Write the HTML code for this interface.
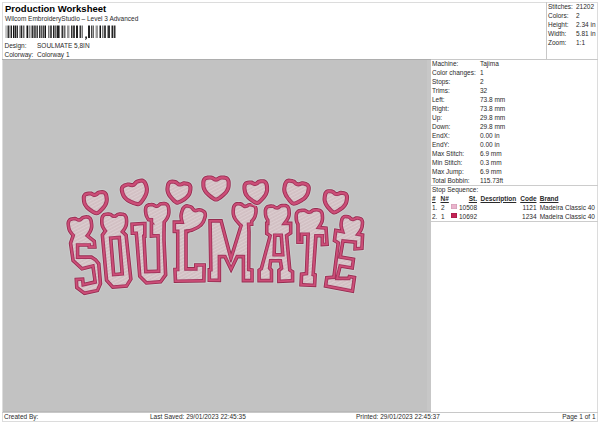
<!DOCTYPE html>
<html><head><meta charset="utf-8"><style>
html,body{margin:0;padding:0;background:#fff;width:600px;height:424px;overflow:hidden}
.t{position:absolute;white-space:nowrap;font-family:"Liberation Sans",sans-serif;color:#2a2a2a;line-height:1}
.l{position:absolute}
svg{position:absolute;left:0;top:0}
</style></head><body>
<div class="l" style="left:3px;top:59px;width:428px;height:353px;background:#c2c2c2"></div>
<div class="l" style="left:427px;top:59px;width:4px;height:353px;background:#c7c7c7"></div>
<div class="l" style="left:2px;top:2px;width:596px;height:1px;background:#dcdcdc"></div>
<div class="l" style="left:2px;top:421px;width:596px;height:1px;background:#dcdcdc"></div>
<div class="l" style="left:2px;top:2px;width:1px;height:420px;background:#dcdcdc"></div>
<div class="l" style="left:597px;top:2px;width:1px;height:420px;background:#dcdcdc"></div>
<div class="l" style="left:546px;top:2px;width:1px;height:57px;background:#c8c8c8"></div>
<div class="l" style="left:2px;top:59px;width:429px;height:1px;background:#adadad"></div>
<div class="l" style="left:431px;top:59px;width:167px;height:1px;background:#c8c8c8"></div>
<div class="l" style="left:3px;top:411px;width:428px;height:1px;background:#b8b8b8"></div>
<div class="l" style="left:2px;top:412px;width:596px;height:1px;background:#c8c8c8"></div>
<div class="l" style="left:431px;top:185px;width:167px;height:1px;background:#cccccc"></div>
<div class="l" style="left:431px;top:221px;width:167px;height:1px;background:#cccccc"></div>
<div class="t" style="left:5px;top:3.71px;font-size:9.5px;font-weight:bold;color:#000;">Production Worksheet</div>
<div class="t" style="left:5px;top:15.50px;font-size:6.5px;">Wilcom EmbroideryStudio – Level 3 Advanced</div>
<div class="t" style="left:4.5px;top:42.70px;font-size:6.5px;">Design:</div>
<div class="t" style="left:37px;top:42.70px;font-size:6.5px;">SOULMATE 5,8IN</div>
<div class="t" style="left:4.5px;top:51.70px;font-size:6.5px;">Colorway:</div>
<div class="t" style="left:37px;top:51.70px;font-size:6.5px;">Colorway 1</div>
<div class="t" style="left:548px;top:4.00px;font-size:6.5px;">Stitches:</div>
<div class="t" style="left:576px;top:4.00px;font-size:6.5px;">21202</div>
<div class="t" style="left:548px;top:13.00px;font-size:6.5px;">Colors:</div>
<div class="t" style="left:576px;top:13.00px;font-size:6.5px;">2</div>
<div class="t" style="left:548px;top:22.00px;font-size:6.5px;">Height:</div>
<div class="t" style="left:576px;top:22.00px;font-size:6.5px;">2.34 in</div>
<div class="t" style="left:548px;top:31.00px;font-size:6.5px;">Width:</div>
<div class="t" style="left:576px;top:31.00px;font-size:6.5px;">5.81 in</div>
<div class="t" style="left:548px;top:40.00px;font-size:6.5px;">Zoom:</div>
<div class="t" style="left:576px;top:40.00px;font-size:6.5px;">1:1</div>
<div class="t" style="left:432px;top:60.70px;font-size:6.5px;">Machine:</div>
<div class="t" style="left:480px;top:60.70px;font-size:6.5px;">Tajima</div>
<div class="t" style="left:432px;top:69.70px;font-size:6.5px;">Color changes:</div>
<div class="t" style="left:480px;top:69.70px;font-size:6.5px;">1</div>
<div class="t" style="left:432px;top:78.70px;font-size:6.5px;">Stops:</div>
<div class="t" style="left:480px;top:78.70px;font-size:6.5px;">2</div>
<div class="t" style="left:432px;top:87.70px;font-size:6.5px;">Trims:</div>
<div class="t" style="left:480px;top:87.70px;font-size:6.5px;">32</div>
<div class="t" style="left:432px;top:96.70px;font-size:6.5px;">Left:</div>
<div class="t" style="left:480px;top:96.70px;font-size:6.5px;">73.8 mm</div>
<div class="t" style="left:432px;top:105.70px;font-size:6.5px;">Right:</div>
<div class="t" style="left:480px;top:105.70px;font-size:6.5px;">73.8 mm</div>
<div class="t" style="left:432px;top:114.70px;font-size:6.5px;">Up:</div>
<div class="t" style="left:480px;top:114.70px;font-size:6.5px;">29.8 mm</div>
<div class="t" style="left:432px;top:123.70px;font-size:6.5px;">Down:</div>
<div class="t" style="left:480px;top:123.70px;font-size:6.5px;">29.8 mm</div>
<div class="t" style="left:432px;top:132.70px;font-size:6.5px;">EndX:</div>
<div class="t" style="left:480px;top:132.70px;font-size:6.5px;">0.00 in</div>
<div class="t" style="left:432px;top:141.70px;font-size:6.5px;">EndY:</div>
<div class="t" style="left:480px;top:141.70px;font-size:6.5px;">0.00 in</div>
<div class="t" style="left:432px;top:150.70px;font-size:6.5px;">Max Stitch:</div>
<div class="t" style="left:480px;top:150.70px;font-size:6.5px;">6.9 mm</div>
<div class="t" style="left:432px;top:159.70px;font-size:6.5px;">Min Stitch:</div>
<div class="t" style="left:480px;top:159.70px;font-size:6.5px;">0.3 mm</div>
<div class="t" style="left:432px;top:168.70px;font-size:6.5px;">Max Jump:</div>
<div class="t" style="left:480px;top:168.70px;font-size:6.5px;">6.9 mm</div>
<div class="t" style="left:432px;top:177.70px;font-size:6.5px;">Total Bobbin:</div>
<div class="t" style="left:480px;top:177.70px;font-size:6.5px;">115.73ft</div>
<div class="t" style="left:432px;top:186.90px;font-size:6.5px;">Stop Sequence:</div>
<div class="t" style="left:432px;top:195.70px;font-size:6.5px;font-weight:bold;text-decoration:underline;">#</div>
<div class="t" style="left:440.5px;top:195.70px;font-size:6.5px;font-weight:bold;text-decoration:underline;">N#</div>
<div class="t" style="right:123px;top:195.70px;font-size:6.5px;font-weight:bold;text-decoration:underline;">St.</div>
<div class="t" style="left:480.5px;top:195.70px;font-size:6.5px;font-weight:bold;text-decoration:underline;">Description</div>
<div class="t" style="right:63.5px;top:195.70px;font-size:6.5px;font-weight:bold;text-decoration:underline;">Code</div>
<div class="t" style="left:539.7px;top:195.70px;font-size:6.5px;font-weight:bold;text-decoration:underline;">Brand</div>
<div class="t" style="left:432px;top:205.10px;font-size:6.5px;">1.</div>
<div class="t" style="left:441px;top:205.10px;font-size:6.5px;">2</div>
<div class="l" style="left:451.2px;top:203.8px;width:5.8px;height:5.6px;background:#eab4cc;box-shadow:inset 0 0 0 0.6px #d09ab4"></div>
<div class="t" style="right:123px;top:205.10px;font-size:6.5px;">10508</div>
<div class="t" style="right:63.5px;top:205.10px;font-size:6.5px;">1121</div>
<div class="t" style="left:539.7px;top:205.10px;font-size:6.5px;">Madeira Classic 40</div>
<div class="t" style="left:432px;top:213.60px;font-size:6.5px;">2.</div>
<div class="t" style="left:441px;top:213.60px;font-size:6.5px;">1</div>
<div class="l" style="left:451.2px;top:212.8px;width:5.8px;height:5.6px;background:#c42454;box-shadow:inset 0 0 0 0.6px #a01c48"></div>
<div class="t" style="right:123px;top:213.60px;font-size:6.5px;">10692</div>
<div class="t" style="right:63.5px;top:213.60px;font-size:6.5px;">1234</div>
<div class="t" style="left:539.7px;top:213.60px;font-size:6.5px;">Madeira Classic 40</div>
<div class="t" style="left:4px;top:413.50px;font-size:6.5px;">Created By:</div>
<div class="t" style="left:150px;top:413.50px;font-size:6.5px;">Last Saved: 29/01/2023 22:45:35</div>
<div class="t" style="left:356px;top:413.50px;font-size:6.5px;">Printed: 29/01/2023 22:45:37</div>
<div class="t" style="right:4.5px;top:413.50px;font-size:6.5px;">Page 1 of 1</div>

<svg width="600" height="424" viewBox="0 0 600 424"><rect x="5.5" y="25.5" width="1.10" height="12.5" fill="#999"/><rect x="7.5" y="25.5" width="1.70" height="12.5" fill="#333"/><rect x="9.6" y="25.5" width="0.80" height="12.5" fill="#555"/><rect x="10.8" y="25.5" width="1.20" height="12.5" fill="#222"/><rect x="13" y="25.5" width="1.50" height="12.5" fill="#111"/><rect x="15" y="25.5" width="1.20" height="12.5" fill="#222"/><rect x="16.6" y="25.5" width="1.40" height="12.5" fill="#333"/><rect x="19.5" y="25.5" width="1.10" height="12.5" fill="#444"/><rect x="21" y="25.5" width="1.20" height="12.5" fill="#222"/><rect x="22.8" y="25.5" width="1.70" height="12.5" fill="#666"/><rect x="26.5" y="25.5" width="1.50" height="12.5" fill="#111"/><rect x="28.5" y="25.5" width="2.00" height="12.5" fill="#888"/><rect x="31.5" y="25.5" width="1.50" height="12.5" fill="#333"/><rect x="33.4" y="25.5" width="1.60" height="12.5" fill="#555"/><rect x="35.3" y="25.5" width="1.20" height="12.5" fill="#222"/><rect x="37" y="25.5" width="1.00" height="12.5" fill="#444"/><rect x="39" y="25.5" width="1.50" height="12.5" fill="#333"/><rect x="41" y="25.5" width="1.40" height="12.5" fill="#555"/><rect x="42.8" y="25.5" width="1.20" height="12.5" fill="#444"/><rect x="44.5" y="25.5" width="1.50" height="12.5" fill="#111"/><rect x="48" y="25.5" width="1.50" height="12.5" fill="#777"/><rect x="50" y="25.5" width="2.00" height="12.5" fill="#555"/><rect x="53" y="25.5" width="1.50" height="12.5" fill="#222"/><rect x="55" y="25.5" width="1.60" height="12.5" fill="#666"/><rect x="57" y="25.5" width="2.60" height="12.5" fill="#222"/><rect x="61.5" y="25.5" width="1.50" height="12.5" fill="#333"/><rect x="63.5" y="25.5" width="2.00" height="12.5" fill="#666"/><rect x="67" y="25.5" width="2.50" height="12.5" fill="#999"/><rect x="71" y="25.5" width="1.50" height="12.5" fill="#333"/><rect x="73" y="25.5" width="2.00" height="12.5" fill="#444"/><rect x="76" y="25.5" width="2.00" height="12.5" fill="#222"/><rect x="79.5" y="25.5" width="1.50" height="12.5" fill="#333"/><rect x="81.5" y="25.5" width="1.50" height="12.5" fill="#777"/><rect x="88" y="25.5" width="2.00" height="12.5" fill="#222"/><rect x="91" y="25.5" width="1.40" height="12.5" fill="#444"/><rect x="92.8" y="25.5" width="1.20" height="12.5" fill="#666"/><rect x="95.5" y="25.5" width="2.50" height="12.5" fill="#999"/><rect x="99.5" y="25.5" width="1.50" height="12.5" fill="#111"/><rect x="102" y="25.5" width="1.50" height="12.5" fill="#777"/><rect x="104" y="25.5" width="2.00" height="12.5" fill="#444"/><rect x="107.5" y="25.5" width="2.50" height="12.5" fill="#333"/><rect x="111.5" y="25.5" width="1.50" height="12.5" fill="#222"/><rect x="113.6" y="25.5" width="1.90" height="12.5" fill="#333"/><path d="M85.2,36.5 h1.8 v1.8 l-1.2,1.8 h-0.6 l0.6,-1.8 h-0.6 z" fill="#222"/></svg>
<svg width="600" height="424" viewBox="0 0 600 424"><defs><pattern id="sat" patternUnits="userSpaceOnUse" width="3" height="3" patternTransform="rotate(-28)"><rect width="3" height="3" fill="#d4c2c5"/><rect y="0" width="3" height="0.9" fill="#ddcfd2"/><rect x="1" y="1.8" width="1.2" height="0.6" fill="#c9b7bb"/></pattern></defs><path d="M78.8,217.3 78.3,217.1 77.1,216.4 76.6,216.2 75.5,215.9 74.5,215.9 72.9,216.0 71.4,216.3 69.8,216.8 68.8,217.3 67.9,217.9 67.4,218.3 66.8,219.2 66.2,220.2 65.9,221.3 65.6,222.4 65.5,223.6 65.6,224.8 65.8,226.7 66.1,228.5 66.5,229.8 66.9,231.1 67.5,232.3 68.3,233.6 69.1,234.8 70.2,236.0 67.8,242.7 67.8,243.0 70.5,261.6 70.6,262.0 80.9,271.5 81.2,271.6 81.5,271.7 81.7,271.7 90.7,269.3 92.2,279.9 85.6,281.4 85.2,277.1 85.0,276.7 84.7,276.5 84.4,276.4 74.3,276.9 73.8,277.1 73.5,277.6 74.1,288.6 74.2,289.0 74.5,289.2 83.5,295.9 83.7,296.0 84.0,296.1 98.9,292.9 99.2,292.7 99.5,292.4 103.1,284.4 103.2,283.9 101.4,262.9 101.3,262.7 101.2,262.4 97.4,257.8 92.3,254.5 92.0,254.4 80.3,254.4 80.3,247.7 86.6,247.7 86.6,248.8 86.7,249.1 87.0,249.5 87.4,249.7 96.9,249.7 97.4,249.5 97.6,249.1 97.7,248.7 96.8,240.0 96.6,239.6 91.1,235.3 92.2,233.4 93.2,231.4 93.9,229.3 94.3,227.2 94.4,225.2 94.3,223.3 93.9,220.9 93.4,219.1 92.9,218.0 92.6,217.5 91.9,216.5 91.2,215.8 90.3,215.1 89.7,214.8 89.2,214.6 88.1,214.3 86.5,214.2 85.0,214.3 83.9,214.5 82.4,214.8 81.5,215.2 81.0,215.5 79.3,217.1 79.1,217.2Z" fill="#cbcece" fill-rule="evenodd"/><path d="M78.7,218.2 77.9,217.9 76.3,217.0 75.4,216.8 74.4,216.8 73.0,216.9 71.6,217.2 70.1,217.6 69.2,218.0 68.8,218.3 68.1,218.9 67.6,219.7 67.1,220.5 66.7,221.5 66.5,222.5 66.4,223.6 66.5,224.8 66.7,226.5 67.0,228.3 67.3,229.5 67.7,230.7 68.3,231.9 69.0,233.1 69.8,234.2 71.2,235.8 68.7,243.0 71.4,261.5 81.5,270.8 91.4,268.2 93.2,280.6 84.8,282.5 84.3,277.3 74.4,277.8 75.0,288.5 84.0,295.2 98.7,292.0 102.3,284.0 100.5,263.0 96.8,258.5 92.0,255.3 79.4,255.3 79.4,246.8 87.5,246.8 87.5,248.8 96.8,248.8 96.0,240.3 89.8,235.4 91.1,233.6 92.1,231.7 92.9,229.7 93.4,227.8 93.5,225.9 93.4,224.0 93.0,221.0 92.6,219.4 92.4,218.9 91.9,218.0 91.3,217.1 90.6,216.4 89.8,215.9 89.4,215.6 88.5,215.3 87.5,215.2 86.5,215.1 85.1,215.2 83.6,215.5 82.7,215.7 81.9,216.0 81.5,216.3 80.1,217.6 79.4,218.1 79.1,218.2Z" fill="#962c50" fill-rule="evenodd"/><path d="M78.6,219.0 78.0,218.9 77.5,218.6 76.0,217.8 74.9,217.7 73.6,217.7 72.2,217.9 70.9,218.3 69.7,218.8 69.0,219.2 68.5,219.8 68.1,220.5 67.7,221.3 67.4,222.6 67.3,223.6 67.3,224.7 67.5,226.4 67.8,228.2 68.1,229.3 68.5,230.4 69.0,231.5 70.1,233.1 70.9,234.2 72.2,235.5 69.6,243.1 72.2,261.1 81.7,269.9 92.1,267.1 94.2,281.3 84.0,283.5 83.5,278.2 75.3,278.6 75.8,288.1 84.2,294.3 98.1,291.3 101.4,283.9 99.7,263.3 96.2,259.1 91.7,256.2 78.6,256.2 78.6,246.0 88.3,246.0 88.3,248.0 95.9,248.0 95.2,240.7 88.6,235.6 90.0,233.8 91.0,232.0 91.8,230.1 92.2,228.8 92.5,227.6 92.7,226.4 92.7,225.3 92.4,222.3 91.9,220.2 91.6,219.2 91.2,218.4 90.6,217.7 90.0,217.1 89.0,216.4 88.7,216.3 87.9,216.1 87.0,216.0 86.0,216.0 84.3,216.2 83.4,216.4 82.6,216.7 82.0,217.0 80.7,218.2 80.3,218.5 79.8,218.8 79.2,219.0Z" fill="#cc4e78" fill-rule="evenodd"/><path d="M78.3,220.9 77.4,220.6 75.3,219.5 74.1,219.5 72.6,219.7 71.1,220.1 70.6,220.4 70.3,220.6 69.8,221.1 69.5,221.7 69.3,222.3 69.2,222.9 69.1,224.1 69.4,226.1 69.8,228.3 70.2,229.7 70.9,231.1 72.0,232.5 72.7,233.5 74.3,235.1 71.5,243.3 73.9,260.2 82.2,267.8 93.6,264.8 96.2,282.7 82.4,285.8 81.9,280.1 77.2,280.4 77.6,287.1 84.6,292.3 96.8,289.7 99.5,283.5 97.9,264.1 95.0,260.5 91.2,258.0 76.7,258.0 76.7,244.1 90.2,244.1 90.2,246.1 93.8,246.1 93.4,241.7 86.0,235.9 88.0,233.3 89.1,231.7 89.9,230.0 90.3,228.9 90.6,227.8 90.8,226.8 90.8,225.8 90.7,223.7 90.3,221.1 90.0,220.3 89.6,219.4 89.2,218.9 88.8,218.5 88.1,218.0 86.9,217.8 85.0,217.9 83.9,218.2 83.1,218.5 81.4,220.0 80.6,220.5 79.5,220.9Z" fill="#a3345c" fill-rule="evenodd"/><path d="M75.1,220.4 74.1,220.4 73.2,220.5 71.7,220.9 70.9,221.2 70.6,221.6 70.3,222.3 70.1,223.0 70.0,223.6 70.1,225.0 70.4,227.1 70.8,228.5 71.2,229.7 72.0,231.1 72.7,232.0 73.4,232.9 75.3,234.9 72.4,243.3 74.8,259.7 82.5,266.8 94.4,263.7 97.2,283.4 81.6,286.9 81.0,281.1 78.2,281.2 78.5,286.6 84.8,291.3 96.2,288.9 98.6,283.4 97.0,264.4 94.4,261.2 90.9,258.9 75.8,258.9 75.8,243.2 91.1,243.2 91.1,245.2 92.8,245.2 92.6,242.2 84.8,236.1 87.3,232.8 88.0,231.7 88.8,230.2 89.4,228.6 89.8,227.1 89.9,226.3 89.9,225.3 89.6,222.8 89.3,220.9 89.1,220.3 88.8,219.9 88.2,219.1 87.8,218.9 86.9,218.7 85.1,218.8 84.4,219.0 83.6,219.2 81.9,220.8 80.9,221.4 79.6,221.8 78.2,221.8 77.1,221.4 76.3,221.1Z" fill="url(#sat)" fill-rule="evenodd"/>
<path d="M102.0,231.0 99.8,234.0 99.6,234.2 99.6,234.5 103.9,281.1 104.0,281.4 111.3,289.6 111.7,289.9 112.1,289.9 127.7,288.6 127.9,288.5 128.2,288.4 128.4,288.2 133.5,280.1 133.6,279.6 128.7,234.2 128.6,233.9 128.5,233.7 126.1,231.5 127.4,229.4 128.3,227.3 128.8,225.9 129.2,223.9 129.3,222.5 129.3,220.7 129.2,219.3 129.1,218.1 128.9,216.9 128.7,216.3 128.4,215.7 127.9,214.7 127.2,213.8 126.7,213.3 125.9,212.6 125.4,212.3 124.8,212.0 123.7,211.7 121.5,211.4 120.4,211.4 119.3,211.4 118.2,211.6 117.2,211.8 116.5,212.1 114.9,213.2 114.6,213.4 114.2,213.5 113.8,213.4 113.5,213.2 112.4,212.4 111.8,212.0 110.7,211.7 109.1,211.4 107.5,211.4 105.3,211.6 103.6,212.0 102.6,212.5 102.0,212.9 101.2,213.8 100.6,214.6 100.0,215.7 99.6,216.8 99.4,217.5 99.2,218.7 99.1,220.0 99.2,223.2 99.3,224.6 99.6,225.9 100.1,227.3 100.7,228.7 101.4,230.0ZM116.8,240.4 119.3,271.5 116.1,271.7 113.6,240.6Z" fill="#cbcece" fill-rule="evenodd"/><path d="M113.4,214.2 111.4,212.8 111.0,212.7 110.0,212.4 109.0,212.3 107.5,212.3 106.0,212.4 104.4,212.7 103.5,213.1 103.0,213.3 102.3,213.9 101.6,214.7 101.0,215.6 100.6,216.6 100.4,217.1 100.2,218.2 100.0,220.0 100.0,221.9 100.1,223.8 100.3,225.1 100.7,226.4 101.5,228.3 102.2,229.6 103.1,231.0 100.5,234.5 104.8,281.0 112.0,289.0 127.6,287.7 132.7,279.6 127.8,234.3 124.9,231.6 125.8,230.2 126.9,228.3 127.7,226.4 128.1,225.1 128.3,223.1 128.4,221.3 128.3,219.4 128.1,217.6 128.0,217.1 127.6,216.1 127.1,215.2 126.5,214.3 125.8,213.6 125.4,213.3 124.5,212.9 123.5,212.6 122.4,212.4 120.9,212.3 119.4,212.3 118.4,212.4 117.4,212.7 117.0,212.8 115.4,214.0 114.6,214.4 114.2,214.4 113.8,214.4ZM117.6,239.4 120.3,272.3 115.3,272.7 112.6,239.8Z" fill="#962c50" fill-rule="evenodd"/><path d="M113.0,215.0 111.0,213.6 109.9,213.3 109.0,213.2 107.5,213.1 106.1,213.2 104.7,213.5 103.8,213.8 103.5,214.0 102.9,214.6 102.3,215.2 101.8,216.0 101.4,216.9 101.1,217.8 100.9,218.9 100.9,220.7 100.9,222.5 101.1,224.3 101.3,225.5 101.7,226.7 102.6,228.5 103.3,229.8 104.2,231.0 101.4,234.7 105.6,280.6 112.3,288.1 127.1,286.9 131.8,279.4 127.0,234.7 123.7,231.7 124.7,230.4 125.8,228.5 126.7,226.7 127.1,225.5 127.4,223.7 127.5,221.9 127.5,219.5 127.3,217.8 126.8,216.4 126.4,215.6 125.8,214.9 125.2,214.3 124.6,213.8 123.3,213.4 122.3,213.2 120.9,213.1 119.9,213.1 119.0,213.2 118.1,213.4 117.4,213.6 115.9,214.7 115.4,215.0 114.8,215.2 114.2,215.3 113.6,215.2ZM118.4,238.5 121.2,273.1 114.5,273.6 111.7,239.0Z" fill="#cc4e78" fill-rule="evenodd"/><path d="M112.2,216.6 110.2,215.3 109.6,215.1 108.8,215.0 107.6,215.0 106.3,215.1 105.2,215.3 104.7,215.5 104.2,215.9 103.8,216.3 103.4,216.9 103.1,217.5 102.9,218.2 102.7,219.6 102.7,221.2 102.8,222.9 103.0,224.5 103.2,225.5 103.9,227.1 104.5,228.2 105.2,229.3 106.5,231.0 103.3,235.3 107.4,279.9 113.1,286.2 126.0,285.1 129.9,279.0 125.2,235.6 121.2,231.8 122.8,229.8 123.6,228.8 124.5,227.1 125.2,225.5 125.5,224.0 125.7,222.4 125.7,220.1 125.6,219.1 125.5,218.2 125.3,217.5 125.0,216.9 124.6,216.3 124.2,215.9 123.9,215.6 123.5,215.4 122.9,215.2 122.1,215.1 120.8,215.0 120.0,215.0 118.5,215.2 118.0,215.3 116.9,216.2 116.2,216.6 115.3,217.0 114.2,217.2 113.1,217.0ZM120.1,236.5 123.2,274.8 112.8,275.6 109.7,237.3Z" fill="#a3345c" fill-rule="evenodd"/><path d="M109.8,216.1 108.7,215.9 107.7,215.9 106.1,216.0 105.4,216.2 105.0,216.3 104.5,216.9 104.0,217.8 103.7,218.8 103.6,220.2 103.6,221.8 103.7,223.4 104.0,224.8 104.3,225.7 105.0,227.2 105.6,228.3 107.6,231.1 104.2,235.6 108.3,279.5 113.5,285.3 125.5,284.3 129.0,278.7 124.4,236.0 120.0,231.9 122.1,229.3 122.8,228.3 123.7,226.7 124.3,225.2 124.6,223.9 124.8,222.3 124.8,220.2 124.6,218.4 124.4,217.8 124.2,217.3 123.6,216.5 123.2,216.2 122.3,216.0 120.4,215.9 119.7,215.9 118.7,216.0 118.5,216.1 117.4,216.9 116.7,217.4 115.6,217.9 114.2,218.1 112.8,217.9 111.7,217.4 111.0,216.9ZM120.9,235.5 124.2,275.6 112.0,276.6 108.7,236.5Z" fill="url(#sat)" fill-rule="evenodd"/>
<path d="M145.9,220.6 130.1,221.6 129.9,221.7 129.6,221.8 129.4,222.1 129.3,222.4 129.7,235.3 130.0,235.7 130.4,235.9 133.8,235.9 134.2,240.1 137.1,277.3 137.4,277.7 145.1,285.4 145.4,285.7 145.8,285.7 161.8,284.5 162.1,284.4 162.3,284.1 168.2,275.9 168.4,275.4 166.7,240.0 166.7,232.7 166.9,223.1 168.6,221.0 169.8,219.0 170.4,217.7 170.9,216.3 171.4,214.2 171.6,212.9 171.6,210.9 171.4,209.1 171.2,207.3 170.7,205.5 170.2,204.5 169.6,203.5 168.9,202.7 168.4,202.2 167.6,201.6 167.0,201.4 166.4,201.2 165.4,201.0 163.2,200.9 162.2,200.9 161.2,201.0 160.1,201.3 159.2,201.6 158.6,201.9 157.1,203.2 156.9,203.4 156.6,203.5 156.2,203.4 155.9,203.3 154.8,202.5 154.2,202.2 153.1,202.0 151.6,201.9 150.0,202.0 148.0,202.4 146.5,202.9 145.5,203.5 145.0,203.9 144.3,204.7 144.0,205.3 143.5,206.3 143.1,207.3 143.0,208.0 142.8,209.1 142.8,210.4 143.1,213.4 143.3,214.7 143.6,216.0 144.1,217.3 144.7,218.6ZM146.7,238.9 147.0,238.8 147.3,238.5 147.4,238.3 147.5,238.0 147.5,222.4 148.7,222.4 148.7,237.9 148.8,238.2 149.0,238.6 149.3,238.7 149.5,238.8 155.4,238.5 155.9,268.6 148.4,268.9Z" fill="#cbcece" fill-rule="evenodd"/><path d="M155.5,204.0 153.9,203.1 153.0,202.9 152.1,202.8 151.1,202.8 150.2,202.9 148.7,203.1 147.3,203.6 146.4,204.0 146.0,204.2 145.7,204.6 145.1,205.3 144.3,206.6 143.9,208.1 143.7,209.8 143.7,210.9 143.9,212.7 144.3,215.1 144.7,216.4 145.5,218.1 146.6,219.9 147.7,221.4 130.2,222.5 130.6,235.0 134.6,235.0 135.1,240.0 138.0,277.1 145.7,284.8 161.6,283.6 167.5,275.4 165.8,240.0 165.8,232.7 166.0,222.8 167.4,221.1 168.6,219.2 169.6,217.3 170.2,215.4 170.5,214.1 170.7,212.2 170.6,209.8 170.3,207.4 170.0,206.3 169.7,205.3 169.2,204.4 168.6,203.6 167.9,202.9 167.1,202.4 166.7,202.2 165.7,201.9 164.7,201.8 163.2,201.8 161.8,201.9 160.9,202.0 160.0,202.3 159.1,202.6 157.7,203.9 157.0,204.3 156.6,204.4 156.3,204.4ZM156.8,269.5 147.5,269.8 145.8,238.0 146.6,238.0 146.6,221.5 149.6,221.5 149.6,237.9 156.3,237.6Z" fill="#962c50" fill-rule="evenodd"/><path d="M145.8,222.4 131.1,223.3 131.4,234.2 135.4,234.2 135.9,239.9 138.8,276.7 146.0,283.9 161.1,282.8 166.6,275.1 165.0,240.0 165.0,232.7 165.1,222.4 166.2,221.2 167.1,220.0 168.2,218.2 168.8,217.0 169.2,215.7 169.7,214.0 169.8,212.8 169.8,211.6 169.8,209.8 169.6,208.1 169.4,207.1 169.1,206.1 168.7,205.3 168.2,204.5 167.6,203.9 166.7,203.2 166.3,203.0 165.6,202.8 164.2,202.6 162.8,202.6 161.9,202.7 161.0,202.9 160.2,203.1 159.6,203.4 159.3,203.6 157.8,204.8 157.3,205.1 156.7,205.3 156.1,205.2 155.6,205.0 153.9,204.0 153.3,203.8 152.5,203.7 151.6,203.6 149.8,203.8 148.0,204.2 147.2,204.5 146.6,204.9 145.8,205.8 145.3,206.5 144.9,207.4 144.7,208.2 144.6,209.2 144.6,210.3 144.8,213.2 145.0,214.4 145.3,215.5 145.9,217.2 146.9,218.9 148.2,220.7 150.4,220.7 150.4,237.0 157.1,236.7 157.7,270.3 146.7,270.7 144.9,237.2 145.8,237.2Z" fill="#cc4e78" fill-rule="evenodd"/><path d="M143.9,224.3 133.0,225.0 133.2,232.3 137.0,232.3 137.8,239.8 140.6,275.9 146.7,282.0 160.1,281.0 164.8,274.6 163.1,240.1 163.1,232.7 163.3,221.7 165.2,219.4 166.3,217.9 166.8,216.8 167.3,215.7 167.6,214.6 167.9,213.6 168.0,212.7 168.0,211.6 167.9,210.0 167.7,208.4 167.6,207.5 167.3,206.8 167.1,206.2 166.5,205.4 165.8,204.8 165.2,204.6 164.5,204.5 163.3,204.5 161.8,204.6 160.6,204.9 158.8,206.4 158.0,206.8 156.9,207.1 155.7,207.0 154.8,206.7 152.8,205.6 151.6,205.5 150.1,205.6 148.6,206.0 148.0,206.2 147.6,206.5 147.1,207.1 146.8,207.7 146.6,208.3 146.5,208.9 146.4,209.8 146.5,211.3 146.8,214.0 147.2,215.4 147.6,216.4 148.1,217.4 149.1,218.8 152.3,218.8 152.3,222.6 153.3,223.7 152.3,223.8 152.3,235.1 159.0,234.8 159.5,272.1 144.9,272.6 143.0,235.4 143.9,235.4Z" fill="#a3345c" fill-rule="evenodd"/><path d="M143.0,225.3 133.9,225.9 134.1,231.4 137.9,231.4 138.7,239.7 141.5,275.5 147.1,281.1 159.7,280.1 163.8,274.3 162.2,240.1 162.2,232.7 162.4,221.4 164.1,219.4 165.2,217.9 165.8,216.9 166.2,215.9 166.6,214.9 166.9,213.9 167.0,213.1 167.1,212.1 167.0,210.6 166.9,209.0 166.8,208.1 166.5,207.1 166.2,206.4 165.8,206.0 165.3,205.6 164.7,205.4 162.9,205.4 161.6,205.5 161.0,205.7 160.0,206.6 159.3,207.1 158.3,207.7 157.0,208.0 155.6,207.9 154.5,207.6 153.7,207.2 152.6,206.5 151.3,206.4 149.9,206.6 148.6,206.9 148.3,207.0 148.1,207.2 147.7,207.8 147.5,208.3 147.4,208.8 147.3,209.4 147.4,211.2 147.7,213.8 148.1,215.1 148.6,216.4 149.5,217.9 153.2,217.9 153.2,222.3 155.1,224.5 153.2,224.6 153.2,234.1 159.8,233.9 160.5,273.0 144.1,273.5 142.0,234.5 143.0,234.5Z" fill="url(#sat)" fill-rule="evenodd"/>
<path d="M178.7,219.4 172.4,219.4 172.2,219.5 171.9,219.7 171.7,220.0 171.6,220.2 171.6,233.4 171.9,233.8 172.3,234.1 175.0,234.1 175.0,266.8 172.8,266.8 172.5,267.1 172.3,267.3 172.2,267.6 172.8,283.0 172.9,283.4 173.2,283.8 173.7,283.9 205.6,283.5 205.9,283.4 206.3,283.1 206.5,282.6 206.9,263.2 206.8,262.9 206.6,262.6 206.3,262.4 206.0,262.3 193.8,262.3 193.4,262.6 193.1,263.0 193.1,266.2 188.7,266.2 188.7,234.1 189.4,234.1 189.6,234.0 190.0,233.8 190.2,233.4 191.9,232.9 193.6,232.3 196.8,230.9 199.1,229.7 200.4,228.8 201.7,227.9 202.8,226.8 203.9,225.7 205.2,224.0 205.9,222.7 206.6,220.9 207.6,217.9 208.0,216.0 208.0,214.8 208.0,214.1 207.8,213.0 207.4,211.9 207.0,210.9 206.6,210.4 205.8,209.5 204.4,208.7 202.4,207.8 201.4,207.5 200.4,207.2 198.9,207.1 198.1,207.1 196.3,207.7 195.9,207.8 195.6,207.8 195.3,207.6 195.1,207.4 194.3,206.2 193.8,205.7 193.0,205.0 191.6,204.3 190.1,203.8 188.0,203.3 186.4,203.2 185.2,203.4 184.6,203.6 183.6,204.1 183.1,204.5 182.2,205.3 181.5,206.1 181.1,206.6 180.5,207.7 180.0,208.9 179.0,211.9 178.6,213.2 178.4,214.6 178.3,215.3 178.3,216.7 178.5,218.2Z" fill="#cbcece" fill-rule="evenodd"/><path d="M195.0,208.5 194.4,207.9 193.6,206.7 192.9,206.0 192.1,205.6 190.8,204.9 188.9,204.4 187.9,204.2 186.9,204.1 185.9,204.2 185.4,204.3 184.5,204.7 183.7,205.2 182.9,205.9 181.8,207.1 181.0,208.6 180.6,209.8 180.0,211.5 179.4,214.0 179.2,216.0 179.4,218.1 179.8,220.3 172.5,220.3 172.5,233.2 175.9,233.2 175.9,267.7 173.1,267.7 173.7,283.0 205.6,282.6 206.0,263.2 194.0,263.2 194.0,267.1 187.8,267.1 187.8,233.2 189.3,233.2 189.3,232.6 190.7,232.3 192.2,231.9 193.8,231.3 196.4,230.1 197.9,229.3 199.3,228.5 200.5,227.6 201.7,226.7 202.7,225.7 203.6,224.6 204.4,223.5 205.0,222.4 205.8,220.6 206.4,218.8 206.9,217.1 207.1,215.9 207.1,215.3 207.1,214.3 206.9,213.2 206.6,212.2 206.2,211.3 205.9,211.0 205.2,210.3 204.4,209.7 203.5,209.2 202.1,208.6 200.7,208.2 199.7,208.0 198.8,208.0 198.4,208.0 196.5,208.6 195.7,208.8 195.3,208.7Z" fill="#962c50" fill-rule="evenodd"/><path d="M188.5,232.3 188.5,231.8 190.1,231.6 191.9,231.1 193.5,230.5 196.8,228.9 198.2,228.2 199.4,227.4 200.6,226.5 201.6,225.6 203.0,224.1 203.7,223.1 204.3,222.0 204.8,220.9 205.6,218.6 206.1,216.9 206.3,215.3 206.3,214.3 206.1,213.4 205.8,212.6 205.2,211.5 205.0,211.2 204.3,210.7 203.1,210.0 201.8,209.4 201.0,209.1 200.1,208.9 199.2,208.8 198.5,208.8 198.1,208.9 196.3,209.6 195.7,209.6 195.0,209.5 194.5,209.2 194.0,208.8 192.7,206.9 191.7,206.3 190.5,205.7 189.2,205.3 187.8,205.1 186.4,205.0 185.7,205.1 184.9,205.4 184.2,205.9 183.1,206.8 182.6,207.6 182.0,208.5 181.2,210.6 180.4,213.6 180.1,214.8 180.1,216.0 180.1,217.3 180.3,218.7 180.9,221.2 173.3,221.2 173.3,232.3 176.8,232.3 176.8,268.6 174.0,268.6 174.5,282.1 204.8,281.8 205.1,264.1 194.8,264.1 194.8,268.0 187.0,268.0 187.0,232.3Z" fill="#cc4e78" fill-rule="evenodd"/><path d="M175.9,270.4 176.3,280.3 203.0,279.9 203.2,265.9 196.7,265.9 196.7,269.8 185.1,269.8 185.1,230.5 186.6,230.5 186.6,230.2 189.4,229.9 191.3,229.4 192.7,228.8 196.0,227.3 197.9,226.2 198.9,225.5 199.8,224.7 200.7,223.8 201.8,222.5 202.4,221.6 203.1,220.2 203.8,218.0 204.3,216.5 204.4,215.2 204.4,214.5 204.3,213.9 204.1,213.3 203.9,212.8 203.7,212.5 203.3,212.2 202.3,211.6 201.2,211.2 200.5,210.9 199.7,210.8 198.9,210.7 196.6,211.4 195.6,211.5 194.5,211.3 193.4,210.8 192.7,210.1 191.3,208.2 190.5,207.8 189.8,207.5 189.1,207.2 187.9,207.0 186.8,206.8 186.2,206.9 185.8,207.1 185.3,207.4 184.5,208.1 183.9,208.9 183.5,209.7 182.9,211.2 182.4,212.9 182.2,214.0 182.0,215.0 181.9,216.0 182.0,217.1 182.2,219.0 183.3,223.0 175.2,223.0 175.2,230.5 178.6,230.5 178.6,270.4Z" fill="#a3345c" fill-rule="evenodd"/><path d="M176.1,229.6 179.5,229.6 179.5,271.3 176.8,271.3 177.2,279.4 202.1,279.0 202.3,266.8 197.6,266.8 197.6,270.7 184.2,270.7 184.2,229.6 185.7,229.6 185.7,229.3 189.3,229.0 191.0,228.5 192.9,227.7 196.2,226.2 197.4,225.5 198.8,224.4 200.1,223.2 201.1,222.0 201.8,220.8 202.4,219.3 203.1,217.2 203.5,215.5 203.5,214.9 203.5,214.3 203.4,213.8 203.1,213.2 202.9,213.0 202.5,212.8 201.2,212.1 200.2,211.8 199.3,211.6 198.9,211.6 197.6,212.0 196.8,212.3 195.6,212.4 194.2,212.2 192.9,211.5 192.0,210.7 191.5,210.1 190.7,208.9 190.1,208.6 188.9,208.1 187.4,207.8 186.5,207.8 186.0,208.0 185.4,208.5 185.0,208.9 184.7,209.4 184.3,210.1 183.8,211.5 183.3,213.1 182.9,215.1 182.8,216.5 183.0,218.2 183.3,219.4 184.5,223.9 176.1,223.9Z" fill="url(#sat)" fill-rule="evenodd"/>
<path d="M237.6,226.1 237.7,226.4 237.9,226.7 231.2,248.5 223.4,218.9 223.2,218.5 222.9,218.3 222.5,218.2 208.2,218.2 207.8,218.3 207.4,218.7 207.3,219.1 208.1,267.1 207.4,267.1 207.1,267.2 206.8,267.5 206.6,267.9 206.6,282.0 206.7,282.5 207.1,282.8 207.5,282.9 221.2,283.1 221.6,283.0 221.9,282.7 222.1,282.2 222.1,259.3 223.2,259.3 230.3,274.0 230.6,274.4 231.1,274.5 231.6,274.4 231.9,274.0 238.9,259.3 240.7,259.3 240.7,282.4 240.8,282.8 241.2,283.2 241.6,283.3 253.8,283.3 254.2,283.2 254.6,282.8 254.7,282.4 254.7,268.3 254.5,267.9 254.1,267.7 251.4,267.2 251.7,232.0 251.4,226.9 253.7,226.9 254.0,226.7 254.3,226.4 254.4,226.0 254.4,222.4 255.8,220.6 256.9,218.7 257.7,216.9 258.3,214.9 258.5,213.0 258.7,211.2 258.7,209.3 258.6,208.1 258.3,206.9 257.6,205.5 256.9,204.5 256.2,203.8 255.2,203.1 253.7,202.6 251.7,202.2 250.1,202.1 248.6,202.2 247.6,202.4 247.0,202.7 245.8,203.5 245.2,203.7 244.7,203.4 243.3,202.1 242.6,201.8 241.7,201.5 240.7,201.3 239.7,201.1 238.7,201.1 236.6,201.2 235.6,201.4 235.0,201.6 234.0,202.2 233.2,202.8 232.8,203.3 232.1,204.2 231.5,205.2 231.1,206.3 230.9,207.5 230.6,209.3 230.5,211.8 230.5,213.8 230.8,215.1 231.1,216.5 231.6,217.9 232.3,219.2 233.0,220.5 233.9,221.8 234.9,223.1Z" fill="#cbcece" fill-rule="evenodd"/><path d="M244.8,204.5 244.1,204.1 242.7,202.8 242.3,202.6 241.5,202.3 240.6,202.1 239.1,202.0 237.7,202.0 236.7,202.1 235.8,202.3 234.9,202.6 234.5,202.9 233.8,203.5 233.2,204.2 232.6,205.1 232.2,206.0 232.0,206.5 231.7,207.7 231.6,208.8 231.4,210.6 231.4,212.4 231.5,214.3 231.8,215.6 232.2,216.9 232.7,218.2 233.4,219.4 234.6,221.3 236.1,223.1 238.5,225.7 238.5,226.0 238.8,226.0 239.0,226.2 231.1,251.8 222.5,219.1 208.2,219.1 209.0,268.0 207.5,268.0 207.5,282.0 221.2,282.2 221.2,258.4 223.8,258.4 231.1,273.6 238.3,258.4 241.6,258.4 241.6,282.4 253.8,282.4 253.8,268.5 250.5,268.0 250.8,232.0 250.5,226.0 253.5,226.0 253.5,222.0 254.6,220.7 255.8,218.9 256.7,217.1 257.2,215.3 257.6,213.5 257.8,211.7 257.8,209.9 257.8,208.8 257.7,208.3 257.4,207.3 257.0,206.3 256.5,205.5 255.9,204.7 255.6,204.4 254.8,203.9 253.9,203.6 252.9,203.3 251.5,203.1 250.1,203.0 249.2,203.0 248.3,203.2 247.9,203.3 246.3,204.2 245.5,204.6 245.2,204.6Z" fill="#962c50" fill-rule="evenodd"/><path d="M239.3,225.3 240.0,225.9 231.2,254.4 230.9,254.3 221.8,219.9 209.1,219.9 209.9,268.9 208.3,268.9 208.3,281.2 220.3,281.3 220.3,257.5 224.3,257.5 231.1,271.6 237.8,257.5 242.4,257.5 242.4,281.5 253.0,281.5 253.0,269.2 249.6,268.7 249.9,232.0 249.6,225.2 252.7,225.2 252.7,221.7 253.9,220.2 255.0,218.5 255.9,216.8 256.3,215.7 256.6,214.0 256.9,212.2 257.0,210.5 256.9,208.9 256.8,208.0 256.3,206.7 255.8,206.0 255.0,205.1 254.7,204.9 254.0,204.5 252.7,204.1 251.0,203.9 249.7,203.8 248.8,203.9 248.2,204.1 246.2,205.2 245.7,205.4 245.1,205.5 244.5,205.3 244.0,205.0 242.5,203.8 242.0,203.4 241.2,203.2 240.4,203.0 238.7,202.8 236.9,202.9 235.7,203.2 235.3,203.4 234.7,203.8 233.8,204.8 233.3,205.5 233.0,206.3 232.7,207.3 232.4,208.9 232.3,210.6 232.2,212.4 232.4,214.2 232.6,215.4 233.0,216.6 233.5,217.8 234.1,219.0 234.9,220.2 235.8,221.4 236.8,222.6Z" fill="#cc4e78" fill-rule="evenodd"/><path d="M210.2,270.7 210.2,279.3 218.5,279.5 218.5,255.7 225.5,255.7 231.1,267.3 236.6,255.7 244.3,255.7 244.3,279.7 251.1,279.7 251.1,270.8 247.8,270.3 248.1,232.1 247.6,223.3 250.8,223.3 250.8,220.9 252.1,219.6 252.8,218.6 253.7,217.1 254.3,215.6 254.6,214.7 254.9,213.1 255.1,211.0 255.1,209.5 255.0,208.8 254.8,207.8 254.3,207.0 253.7,206.4 253.1,206.1 251.5,205.8 250.5,205.7 249.4,205.7 248.9,205.8 247.0,206.9 246.1,207.2 244.9,207.3 243.8,207.0 243.0,206.6 241.2,205.1 240.4,204.9 239.7,204.7 238.3,204.7 237.1,204.7 236.2,205.0 235.5,205.6 235.1,206.1 234.8,206.7 234.5,207.7 234.3,208.6 234.1,210.8 234.1,212.4 234.1,213.4 234.3,214.4 234.6,215.4 235.0,216.5 235.5,217.6 236.1,218.6 237.2,220.2 240.0,223.3 242.1,225.4 231.4,259.9 230.4,259.9 220.4,221.8 210.9,221.8 211.7,270.7Z" fill="#a3345c" fill-rule="evenodd"/><path d="M211.1,271.6 211.1,278.5 217.6,278.5 217.6,254.8 226.1,254.8 231.1,265.2 236.0,254.8 245.2,254.8 245.2,278.8 250.2,278.8 250.2,271.6 246.9,271.1 247.2,232.1 246.7,222.4 249.9,222.4 249.9,220.6 251.0,219.4 252.1,218.1 252.7,217.1 253.3,215.7 253.6,214.9 253.9,213.5 254.2,211.4 254.2,210.0 254.2,209.2 254.0,208.4 253.7,207.7 253.3,207.2 252.5,206.9 251.4,206.7 250.4,206.6 249.5,206.6 249.2,206.6 248.1,207.4 247.3,207.8 246.3,208.1 244.8,208.2 243.5,207.9 242.5,207.3 241.8,206.8 240.8,205.9 239.9,205.7 238.7,205.6 237.5,205.6 236.7,205.8 236.4,206.0 236.0,206.4 235.5,207.3 235.3,208.3 235.1,209.2 235.0,210.8 235.0,212.4 235.0,213.3 235.2,214.2 235.4,215.1 235.8,216.1 236.3,217.2 236.8,218.2 237.9,219.7 240.6,222.7 243.1,225.1 231.5,262.6 230.2,262.6 219.7,222.7 211.9,222.7 212.7,271.6Z" fill="url(#sat)" fill-rule="evenodd"/>
<path d="M264.9,220.7 264.6,220.8 264.3,221.0 264.1,221.2 264.0,221.5 264.0,234.5 264.1,234.8 264.3,235.1 267.1,237.0 259.0,266.9 256.7,268.5 256.5,268.8 256.4,269.0 256.4,282.4 256.5,282.8 256.9,283.2 257.3,283.3 273.3,283.3 273.6,283.2 273.9,283.1 274.1,282.8 274.2,282.4 274.2,269.5 274.2,269.2 274.0,269.0 272.5,267.2 273.0,263.5 278.0,263.5 278.6,267.1 276.5,268.9 276.3,269.2 276.2,269.4 276.2,283.2 276.2,283.5 276.4,283.8 276.8,284.0 277.1,284.1 294.4,283.3 294.8,283.2 295.2,282.9 295.3,282.4 295.3,270.7 295.2,270.4 294.9,270.1 292.4,268.5 289.4,237.1 293.1,234.7 293.3,234.3 293.4,234.0 293.4,221.3 293.1,221.0 292.7,220.7 289.8,220.7 290.7,218.8 291.2,217.5 291.6,216.1 291.8,214.2 291.8,211.7 291.6,209.3 291.2,207.6 290.7,206.5 290.1,205.5 289.4,204.7 289.0,204.3 288.1,203.7 287.5,203.4 286.5,203.0 284.8,202.8 283.3,202.8 282.2,202.8 281.1,203.0 280.1,203.2 279.1,203.6 278.6,203.9 277.5,204.8 277.2,205.0 276.9,205.1 276.5,205.0 276.2,204.9 275.1,204.1 274.5,203.8 273.5,203.5 272.4,203.4 270.8,203.4 268.8,203.6 267.2,204.0 266.1,204.5 265.6,204.8 264.8,205.5 264.4,206.0 263.8,206.9 263.3,207.9 263.1,208.5 262.9,209.1 262.7,210.2 262.7,211.4 262.7,213.2 262.9,215.1 263.1,216.3 263.4,217.6 263.7,218.3 264.2,219.5ZM278.8,237.9 279.8,252.1 276.9,252.1 277.5,237.9Z" fill="#cbcece" fill-rule="evenodd"/><path d="M276.2,205.9 274.2,204.7 273.8,204.5 272.8,204.4 271.9,204.3 270.4,204.3 268.9,204.5 267.9,204.8 267.0,205.1 266.5,205.3 266.1,205.5 265.4,206.2 264.8,206.9 264.3,207.8 263.8,209.2 263.6,210.3 263.6,212.0 263.7,214.4 264.0,216.2 264.3,217.4 264.8,218.6 265.4,219.7 266.0,220.8 266.0,221.6 264.9,221.6 264.9,234.4 268.1,236.6 259.8,267.5 257.3,269.2 257.3,282.4 273.3,282.4 273.3,269.5 271.5,267.5 272.2,262.6 278.8,262.6 279.6,267.5 277.1,269.5 277.1,283.2 294.4,282.4 294.4,270.8 291.5,269.0 288.5,236.6 292.5,234.0 292.5,221.6 288.1,221.6 288.9,220.3 289.9,218.5 290.6,216.6 290.8,215.4 291.0,213.5 290.9,211.8 290.8,210.0 290.5,208.4 290.4,207.8 289.9,206.9 289.4,206.1 288.8,205.3 288.0,204.7 287.6,204.4 286.8,204.0 285.8,203.8 284.8,203.7 283.3,203.7 281.8,203.8 280.8,203.9 279.9,204.2 279.5,204.4 278.0,205.5 277.3,206.0 276.9,206.0 276.6,206.0ZM279.6,237.0 280.8,253.0 276.0,253.0 276.6,237.0Z" fill="#962c50" fill-rule="evenodd"/><path d="M275.8,206.6 273.9,205.4 272.7,205.2 271.8,205.1 270.5,205.2 269.1,205.4 268.1,205.6 266.9,206.0 266.6,206.2 266.0,206.8 265.5,207.4 265.1,208.2 264.6,209.4 264.5,210.4 264.4,212.0 264.5,214.3 264.8,216.0 265.1,217.1 265.5,218.2 266.1,219.3 266.9,220.5 266.9,222.4 265.8,222.4 265.8,234.0 269.1,236.2 260.5,268.0 258.2,269.6 258.2,281.5 272.4,281.5 272.4,269.8 270.6,267.8 271.5,261.8 279.5,261.8 280.5,267.9 278.0,269.9 278.0,282.3 293.5,281.6 293.5,271.3 290.7,269.5 287.6,236.2 291.6,233.5 291.6,222.4 286.4,222.4 287.5,221.0 288.5,219.3 289.3,217.5 289.9,215.8 290.1,214.1 290.1,212.4 290.0,210.1 289.7,208.6 289.2,207.3 288.7,206.6 288.2,205.9 287.5,205.4 286.9,205.0 285.6,204.7 284.7,204.5 283.3,204.5 281.5,204.7 280.6,204.9 279.9,205.1 278.6,206.2 278.1,206.5 277.6,206.8 277.0,206.9 276.4,206.8ZM280.4,236.2 281.7,253.8 275.1,253.8 275.8,236.2Z" fill="#cc4e78" fill-rule="evenodd"/><path d="M267.6,224.3 267.6,233.0 271.2,235.5 262.1,269.2 260.0,270.6 260.0,279.7 270.6,279.7 270.6,270.5 268.6,268.4 269.9,259.9 281.1,259.9 282.5,268.6 279.8,270.8 279.8,280.4 291.7,279.8 291.7,272.3 288.9,270.6 285.7,235.2 289.8,232.5 289.8,224.3 282.7,224.3 286.3,219.5 287.2,217.9 287.6,216.9 288.0,215.9 288.1,215.0 288.3,213.5 288.2,211.9 288.1,210.3 288.0,209.4 287.8,208.7 287.6,208.2 287.0,207.4 286.5,206.9 285.9,206.6 285.0,206.4 283.3,206.4 282.2,206.4 280.9,206.7 279.0,208.1 278.2,208.5 277.1,208.8 276.0,208.7 275.1,208.3 273.1,207.2 272.2,207.0 271.0,207.0 269.4,207.2 268.3,207.5 267.9,207.7 267.6,207.9 267.2,208.2 266.9,208.7 266.5,209.6 266.3,210.6 266.3,211.5 266.4,214.1 266.5,215.1 266.7,216.1 267.0,217.0 267.5,217.9 268.7,220.0 268.7,224.3ZM282.1,234.3 283.7,255.7 273.2,255.7 274.0,234.3Z" fill="#a3345c" fill-rule="evenodd"/><path d="M268.5,225.2 268.5,232.5 272.2,235.1 262.9,269.7 260.9,271.1 260.9,278.8 269.7,278.8 269.7,270.9 267.7,268.7 269.1,259.0 281.9,259.0 283.5,269.0 280.7,271.2 280.7,279.4 290.8,279.0 290.8,272.8 288.1,271.1 284.7,234.8 288.9,232.0 288.9,225.2 281.0,225.2 285.5,219.0 286.4,217.5 286.8,216.5 287.1,215.6 287.3,214.8 287.4,213.5 287.3,211.9 287.2,210.4 287.1,209.6 286.9,208.8 286.6,208.4 286.2,207.8 285.8,207.5 284.9,207.3 283.3,207.3 282.0,207.4 281.3,207.5 280.2,208.4 279.5,208.9 278.5,209.4 277.1,209.7 275.8,209.5 274.7,209.2 273.9,208.7 272.8,208.0 272.4,207.9 271.1,207.9 270.0,208.0 268.6,208.3 268.3,208.4 268.0,208.6 267.7,209.2 267.4,209.6 267.3,210.1 267.2,210.7 267.2,212.5 267.3,214.5 267.6,215.8 268.0,217.1 268.5,218.0 269.6,219.7 269.6,225.2ZM282.9,233.4 284.7,256.6 272.3,256.6 273.1,233.4Z" fill="url(#sat)" fill-rule="evenodd"/>
<path d="M295.3,225.0 295.3,244.0 295.4,244.3 295.5,244.6 295.9,244.8 296.2,244.9 303.5,244.9 303.8,244.8 304.1,244.7 304.3,244.4 304.4,244.0 304.4,236.9 305.3,236.9 303.8,271.2 299.6,271.6 299.2,271.9 298.9,272.2 298.3,286.6 298.4,286.9 298.7,287.3 299.2,287.5 316.3,288.1 316.6,288.0 317.0,287.7 317.2,287.2 317.9,273.5 317.8,273.0 317.4,272.7 316.1,272.4 318.4,238.4 319.6,238.4 319.6,246.5 319.7,246.9 320.0,247.2 320.2,247.4 320.6,247.4 329.1,246.9 329.6,246.7 329.8,246.4 329.9,246.1 328.6,226.3 328.3,225.9 328.1,225.7 327.9,225.6 323.3,225.2 324.1,223.5 324.6,222.2 325.0,220.8 325.1,219.3 325.2,217.3 325.1,214.8 324.8,212.9 324.3,211.7 323.8,210.6 323.1,209.7 322.6,209.2 321.8,208.5 321.2,208.1 320.2,207.7 319.5,207.5 318.3,207.3 316.6,207.1 315.5,207.1 313.8,207.3 312.7,207.5 312.1,207.7 311.5,208.0 309.8,209.2 309.5,209.4 309.1,209.5 308.6,209.4 307.1,208.4 306.4,208.1 305.4,207.8 304.2,207.6 302.5,207.6 300.3,207.8 298.5,208.2 297.4,208.7 296.8,209.0 295.9,209.7 295.5,210.2 294.8,211.1 294.2,212.2 294.0,212.8 293.8,213.4 293.6,214.6 293.5,215.9 293.5,217.2 293.6,219.1 293.7,220.5 294.2,222.5 294.7,223.8Z" fill="#cbcece" fill-rule="evenodd"/><path d="M308.7,210.4 307.9,210.0 306.1,208.9 305.7,208.8 304.7,208.6 303.6,208.5 302.0,208.5 300.4,208.7 298.7,209.1 297.7,209.5 297.3,209.7 296.5,210.4 295.8,211.2 295.3,212.1 294.8,213.1 294.7,213.6 294.5,214.7 294.4,215.9 294.4,217.8 294.5,219.7 294.7,220.9 295.1,222.2 295.3,222.9 296.2,224.8 296.2,244.0 303.5,244.0 303.5,236.0 306.2,236.0 304.7,272.0 299.8,272.5 299.2,286.6 316.3,287.2 317.0,273.5 315.1,273.1 317.6,237.5 320.5,237.5 320.5,246.5 329.0,246.0 327.7,226.5 321.8,226.0 322.3,225.1 323.0,223.8 323.8,221.9 323.9,221.2 324.2,219.9 324.3,218.6 324.3,217.4 324.2,215.5 324.1,214.3 323.7,212.6 323.5,212.1 323.0,211.1 322.4,210.3 321.6,209.5 320.8,208.9 320.4,208.7 319.3,208.4 318.2,208.2 317.1,208.1 315.0,208.1 313.4,208.3 312.4,208.5 311.5,209.0 309.9,210.2 309.5,210.4 309.1,210.4Z" fill="#962c50" fill-rule="evenodd"/><path d="M308.5,211.2 307.9,211.0 307.4,210.7 305.8,209.7 305.0,209.5 304.1,209.4 302.6,209.3 301.0,209.5 299.5,209.8 298.1,210.2 297.5,210.7 296.8,211.3 296.3,212.1 295.8,212.9 295.5,213.8 295.3,214.8 295.2,216.0 295.3,217.8 295.4,219.6 295.6,220.8 296.1,222.6 296.6,223.7 297.1,224.6 297.1,243.2 302.6,243.2 302.6,235.2 307.1,235.2 305.5,272.8 300.6,273.3 300.1,285.8 315.5,286.3 316.1,274.2 314.2,273.8 316.8,236.7 321.4,236.7 321.4,245.6 328.1,245.2 326.9,227.3 320.3,226.7 321.2,225.3 321.9,224.1 322.7,222.2 323.2,220.4 323.4,218.6 323.4,215.6 323.3,214.4 323.1,213.3 322.7,212.4 322.3,211.6 321.7,210.8 321.1,210.2 320.4,209.7 320.0,209.5 319.1,209.2 318.1,209.0 317.1,208.9 315.1,208.9 313.6,209.1 312.7,209.3 312.4,209.5 310.8,210.6 310.3,210.9 309.8,211.2 309.1,211.3Z" fill="#cc4e78" fill-rule="evenodd"/><path d="M298.5,223.4 298.9,224.1 298.9,241.3 300.8,241.3 300.8,233.3 309.0,233.3 307.3,274.4 302.4,274.9 302.0,284.0 313.7,284.4 314.2,275.7 312.2,275.3 315.1,234.8 323.2,234.8 323.2,243.6 326.1,243.5 325.2,229.0 317.0,228.3 320.0,223.8 320.8,222.1 321.3,220.6 321.5,219.6 321.6,218.5 321.6,216.3 321.4,214.2 321.0,213.2 320.7,212.6 320.3,212.0 319.9,211.6 319.5,211.3 319.0,211.1 318.3,210.9 317.0,210.8 315.2,210.8 314.4,210.9 313.3,211.1 311.2,212.6 310.3,213.0 309.2,213.2 308.1,213.0 307.1,212.7 305.0,211.4 304.3,211.3 303.0,211.2 301.7,211.3 299.9,211.6 299.0,211.9 298.6,212.1 298.2,212.5 297.8,213.1 297.5,213.7 297.2,214.7 297.1,216.0 297.1,218.2 297.4,220.4 297.8,221.9Z" fill="#a3345c" fill-rule="evenodd"/><path d="M299.3,223.0 299.8,223.8 299.8,240.4 299.9,240.4 299.9,232.4 310.0,232.4 308.2,275.3 303.3,275.8 303.0,283.1 312.9,283.5 313.2,276.4 311.3,276.0 314.2,233.9 324.1,233.9 324.1,242.7 325.2,242.6 324.3,229.8 315.5,229.1 319.2,223.4 319.7,222.3 320.3,220.8 320.6,219.5 320.7,217.4 320.5,214.8 320.4,214.0 320.2,213.5 319.6,212.6 319.3,212.2 318.9,212.0 317.8,211.7 316.5,211.6 314.9,211.7 313.6,211.9 312.4,212.9 311.6,213.4 310.6,213.8 309.2,214.1 307.9,213.9 306.8,213.5 306.0,213.1 304.8,212.3 304.2,212.2 303.0,212.1 301.8,212.2 300.5,212.3 299.4,212.7 299.1,212.9 298.7,213.3 298.2,214.3 298.0,215.2 298.0,216.6 298.1,218.7 298.3,220.3 298.6,221.6Z" fill="url(#sat)" fill-rule="evenodd"/>
<path d="M338.8,228.2 334.2,227.4 333.9,227.4 333.7,227.6 333.4,227.8 333.3,228.1 331.6,241.6 331.7,242.0 332.0,242.2 335.3,244.3 331.5,274.7 325.1,275.1 324.7,275.2 324.5,275.5 324.3,275.9 322.6,287.4 322.6,287.7 322.9,288.2 323.3,288.4 353.8,294.1 354.2,294.1 354.4,294.0 354.7,293.8 354.8,293.6 354.9,293.3 357.4,276.1 357.4,275.8 357.2,275.5 357.0,275.2 356.7,275.1 348.0,273.6 347.5,273.7 347.2,274.0 346.8,275.7 340.5,275.7 342.2,269.0 353.7,270.9 354.1,270.8 354.5,270.6 354.7,270.1 356.4,257.9 356.4,257.6 356.1,257.1 355.7,256.9 343.3,254.8 345.2,243.9 352.6,244.6 352.3,250.9 352.5,251.3 352.9,251.7 353.3,251.7 363.7,250.9 364.1,250.8 364.4,250.5 364.5,250.0 365.4,233.4 365.2,233.0 364.8,232.7 362.7,232.3 363.4,231.1 363.9,229.9 364.4,228.7 364.8,226.9 365.1,225.1 365.2,223.3 365.2,221.6 364.9,220.5 364.3,218.9 363.8,218.1 363.4,217.6 362.7,216.9 362.3,216.6 361.7,216.4 360.8,216.0 359.4,215.6 358.4,215.4 357.0,215.3 356.0,215.4 355.0,215.6 354.4,215.8 353.3,216.5 352.8,216.7 352.3,216.4 351.4,215.4 351.0,215.0 350.1,214.6 349.2,214.2 347.7,213.9 346.3,213.8 344.8,213.9 343.7,214.0 343.2,214.2 342.3,214.6 341.8,215.0 341.1,215.7 340.7,216.1 340.0,217.0 339.6,218.0 339.3,218.5 339.0,219.6 338.8,220.8 338.4,223.8 338.4,225.1 338.4,226.3Z" fill="#cbcece" fill-rule="evenodd"/><path d="M352.3,217.5 351.7,217.0 350.5,215.8 349.7,215.4 348.5,215.0 346.7,214.7 344.9,214.8 343.5,215.0 342.8,215.4 341.7,216.3 340.8,217.5 340.2,218.8 339.8,220.4 339.4,223.3 339.3,224.4 339.3,225.6 339.5,227.5 340.0,229.3 334.2,228.3 332.5,241.5 336.3,243.8 332.3,275.5 325.2,276.0 323.5,287.5 354.0,293.2 356.5,276.0 348.0,274.5 347.5,276.6 339.4,276.6 341.5,268.0 353.8,270.0 355.5,257.8 342.3,255.5 344.5,242.9 353.5,243.8 353.2,250.8 363.6,250.0 364.5,233.5 361.2,232.9 362.3,231.3 362.8,230.2 363.3,229.0 363.8,227.3 364.2,224.4 364.3,222.8 364.3,221.7 363.9,220.3 363.5,219.4 363.1,218.6 362.5,217.9 362.1,217.6 360.9,217.0 359.2,216.5 357.4,216.3 356.5,216.3 355.7,216.3 354.9,216.6 353.4,217.5 353.0,217.6 352.7,217.6Z" fill="#962c50" fill-rule="evenodd"/><path d="M352.0,218.3 351.5,218.0 351.1,217.6 350.0,216.5 349.4,216.2 348.3,215.8 346.7,215.6 344.9,215.6 343.8,215.8 343.2,216.1 342.3,216.9 341.8,217.5 341.3,218.3 341.0,219.1 340.7,220.1 340.3,222.2 340.1,224.5 340.2,226.2 340.5,227.9 341.3,230.4 334.9,229.3 333.4,241.1 337.2,243.4 333.1,276.3 325.9,276.8 324.5,286.8 353.3,292.2 355.5,276.7 348.6,275.5 348.2,277.5 338.3,277.5 340.9,267.0 353.1,269.0 354.5,258.5 341.3,256.2 343.8,242.0 354.4,243.0 354.1,249.9 362.8,249.2 363.6,234.2 359.7,233.5 360.8,231.9 361.8,230.3 362.3,229.3 362.8,227.7 363.2,225.4 363.5,223.3 363.4,221.8 363.1,220.5 362.8,219.8 362.4,219.1 361.6,218.3 360.6,217.8 359.8,217.5 358.6,217.2 357.0,217.1 355.9,217.2 355.3,217.4 353.7,218.3 353.1,218.4 352.5,218.4Z" fill="#cc4e78" fill-rule="evenodd"/><path d="M350.0,277.6 349.6,279.3 336.0,279.3 339.5,264.9 351.5,266.9 352.5,260.0 339.2,257.7 342.3,240.0 356.3,241.4 356.0,247.9 361.0,247.5 361.7,235.8 356.4,234.9 359.6,230.4 360.2,229.5 360.6,228.6 361.0,227.2 361.3,225.7 361.6,223.7 361.6,222.4 361.5,221.7 361.4,221.2 360.9,220.2 360.4,219.7 359.3,219.3 357.6,219.0 356.2,219.0 354.3,220.0 353.4,220.3 352.3,220.3 351.2,219.9 350.4,219.4 349.0,218.0 348.7,217.9 347.9,217.6 347.2,217.5 346.2,217.4 345.1,217.4 344.5,217.6 343.9,218.0 343.3,218.6 342.9,219.4 342.6,220.1 342.3,221.4 342.0,224.0 342.0,225.5 342.2,226.9 342.4,228.0 344.0,232.7 336.5,231.4 335.4,240.1 339.2,242.4 334.7,278.0 327.6,278.5 326.6,285.3 351.7,290.0 353.5,278.2Z" fill="#a3345c" fill-rule="evenodd"/><path d="M335.1,278.9 328.3,279.4 327.6,284.6 351.0,289.0 352.4,278.9 350.7,278.6 350.3,280.2 334.8,280.2ZM335.9,275.8 338.8,263.9 350.7,265.9 351.5,260.7 338.1,258.4 341.5,239.0 357.2,240.6 357.0,246.9 360.2,246.7 360.7,236.5 354.8,235.5 358.9,229.9 359.6,228.6 359.9,227.9 360.2,227.0 360.4,225.6 360.6,224.0 360.7,222.8 360.7,222.1 360.5,221.5 360.2,220.7 359.8,220.5 359.1,220.2 358.1,219.9 357.2,219.8 356.5,219.9 355.4,220.5 354.7,220.8 353.6,221.2 352.2,221.2 350.8,220.8 349.8,220.2 349.2,219.6 348.4,218.7 347.6,218.5 346.8,218.4 345.5,218.3 344.8,218.4 344.3,218.8 344.0,219.1 343.7,219.8 343.5,220.3 343.2,221.6 343.0,223.1 342.9,224.6 342.9,225.5 343.0,226.3 343.3,227.7 345.3,233.9 337.3,232.5 336.4,239.6 340.2,241.9Z" fill="url(#sat)" fill-rule="evenodd"/>
<path d="M94.5,191.9 94.2,191.8 93.9,191.7 92.7,191.0 92.1,190.8 91.1,190.6 90.0,190.5 88.5,190.6 86.5,190.9 84.9,191.4 83.9,191.8 83.0,192.5 82.3,193.3 81.7,194.3 81.3,195.3 81.0,196.4 80.8,197.5 80.8,198.7 80.9,199.9 81.1,201.6 81.3,202.8 81.7,204.1 82.1,205.3 82.8,206.5 83.5,207.6 84.4,208.8 85.4,209.8 86.5,210.9 87.8,211.9 90.8,213.9 92.3,214.8 93.6,215.5 94.9,216.0 96.0,216.2 97.1,216.2 98.1,216.0 99.2,215.5 100.3,214.8 101.5,213.9 102.8,212.6 105.2,210.1 106.3,208.8 107.2,207.6 107.9,206.3 108.5,205.0 109.0,203.7 109.4,202.4 109.6,201.1 109.7,199.9 109.7,198.6 109.5,196.9 109.3,195.7 109.1,194.6 108.7,193.4 108.2,192.5 107.6,191.6 106.8,190.8 105.9,190.1 104.9,189.6 103.8,189.4 102.2,189.2 100.2,189.3 98.6,189.6 97.6,189.9 96.7,190.3 96.1,190.7 95.1,191.6 94.9,191.8Z" fill="#cbcece" fill-rule="evenodd"/><path d="M94.6,192.8 94.2,192.8 93.9,192.7 91.8,191.6 91.0,191.4 90.0,191.4 88.6,191.4 86.7,191.8 85.2,192.2 84.3,192.6 83.6,193.2 83.0,193.9 82.5,194.7 82.1,195.6 81.8,196.6 81.7,197.6 81.8,199.8 82.0,201.5 82.2,202.6 82.5,203.8 83.0,204.9 83.6,206.0 84.3,207.1 85.1,208.2 86.0,209.2 87.1,210.2 88.4,211.2 91.3,213.2 92.7,214.0 94.0,214.7 95.1,215.1 96.1,215.3 97.0,215.3 97.9,215.1 98.8,214.7 99.8,214.1 100.9,213.2 102.1,212.0 104.6,209.5 105.6,208.3 106.4,207.1 107.1,205.9 107.7,204.7 108.2,203.4 108.5,202.2 108.7,201.0 108.8,199.8 108.8,198.7 108.6,197.0 108.2,194.8 107.9,193.8 107.5,193.0 106.9,192.2 106.2,191.5 105.5,190.9 104.6,190.5 103.7,190.3 102.2,190.1 100.3,190.2 98.8,190.5 97.9,190.7 97.1,191.1 95.3,192.5 95.0,192.7Z" fill="#962c50" fill-rule="evenodd"/><path d="M94.7,193.7 94.1,193.6 93.6,193.5 91.6,192.4 90.4,192.2 89.1,192.3 87.8,192.4 86.4,192.7 85.1,193.2 84.5,193.6 83.9,194.1 83.5,194.8 82.9,195.9 82.7,196.7 82.6,197.6 82.7,199.7 83.1,202.4 83.3,203.5 83.7,204.5 84.3,205.6 85.0,206.6 85.8,207.7 86.7,208.6 87.7,209.6 88.9,210.5 91.7,212.4 93.1,213.3 94.4,213.9 95.4,214.3 96.2,214.5 96.9,214.5 97.6,214.3 98.3,214.0 99.3,213.4 100.3,212.5 101.5,211.4 103.9,208.9 104.9,207.7 105.7,206.6 106.4,205.5 106.9,204.3 107.4,203.2 107.7,202.0 107.9,200.9 107.9,199.8 107.8,197.1 107.4,195.0 107.1,194.2 106.7,193.4 105.9,192.4 105.3,191.8 104.7,191.4 104.0,191.2 102.7,191.0 101.2,191.0 99.9,191.1 98.6,191.4 97.5,191.8 95.8,193.2 95.3,193.5Z" fill="#cc4e78" fill-rule="evenodd"/><path d="M95.0,196.0 93.7,196.0 92.7,195.7 92.0,195.3 90.9,194.7 90.6,194.6 89.6,194.6 88.9,194.6 87.8,194.8 86.7,195.1 86.2,195.3 85.8,195.5 85.5,196.0 85.1,196.7 85.0,197.2 84.9,197.8 85.0,199.5 85.3,201.5 85.5,202.4 85.7,203.2 86.1,204.0 86.6,204.8 87.2,205.7 87.9,206.6 88.7,207.3 89.7,208.2 93.0,210.5 94.3,211.2 95.3,211.8 96.2,212.1 96.7,212.1 97.0,212.0 97.9,211.5 98.8,210.8 99.9,209.8 102.6,206.8 103.4,205.8 104.0,204.9 104.5,203.9 105.0,202.9 105.3,201.9 105.5,201.1 105.6,200.3 105.6,199.3 105.4,197.4 105.1,195.6 105.0,195.1 104.7,194.6 104.3,194.0 103.8,193.6 103.4,193.5 102.9,193.4 101.7,193.3 100.6,193.4 99.9,193.5 98.9,193.7 98.7,193.9 97.7,194.7 97.1,195.2 96.2,195.7Z" fill="#a3345c" fill-rule="evenodd"/><path d="M90.5,195.5 89.0,195.5 87.2,195.9 86.5,196.1 86.1,196.6 85.9,197.2 85.8,197.5 85.8,199.0 86.1,201.3 86.5,202.8 87.1,203.9 87.9,205.2 89.0,206.3 89.8,207.1 91.4,208.3 93.9,210.0 95.4,210.8 96.2,211.1 96.6,211.2 97.4,210.8 98.5,209.8 101.0,207.3 102.7,205.3 103.2,204.4 103.7,203.5 104.1,202.6 104.4,201.7 104.6,200.9 104.7,200.2 104.7,198.9 104.5,197.5 104.3,196.2 104.1,195.4 103.7,194.8 103.4,194.4 103.2,194.3 102.1,194.2 100.4,194.3 99.2,194.6 98.3,195.4 97.6,196.0 96.5,196.5 95.1,196.9 93.6,196.9 92.4,196.5 91.6,196.1Z" fill="url(#sat)" fill-rule="evenodd"/>
<path d="M132.1,182.2 131.7,182.2 130.0,181.6 129.3,181.5 128.2,181.5 127.1,181.6 125.5,182.0 123.5,182.8 121.9,183.6 121.0,184.3 120.2,185.2 119.6,186.2 119.2,187.2 118.9,188.4 118.8,189.6 118.9,190.8 119.1,192.0 119.5,193.2 120.0,195.0 120.5,196.2 121.1,197.4 121.8,198.6 122.8,199.7 123.8,200.7 124.9,201.7 126.2,202.7 127.6,203.5 129.2,204.3 132.6,205.8 134.4,206.4 136.0,206.8 137.4,207.1 138.6,207.1 139.7,206.9 140.7,206.4 141.7,205.7 142.8,204.8 143.8,203.5 144.9,202.0 147.0,198.8 147.8,197.3 148.5,195.8 149.0,194.4 149.4,192.9 149.7,191.4 149.8,190.0 149.8,188.7 149.6,187.3 149.3,186.0 148.8,184.3 148.4,183.1 147.9,181.9 147.3,180.8 146.6,179.9 145.7,179.1 144.7,178.5 143.7,178.0 142.6,177.7 141.4,177.6 139.7,177.8 137.6,178.3 136.0,178.9 135.0,179.4 134.1,180.0 133.6,180.5 132.5,181.9Z" fill="#cbcece" fill-rule="evenodd"/><path d="M132.4,183.0 132.0,183.1 131.6,183.1 129.2,182.4 128.3,182.4 127.3,182.5 125.8,182.9 123.8,183.6 122.4,184.4 121.6,185.0 120.9,185.7 120.4,186.6 120.0,187.5 119.8,188.5 119.7,189.6 119.8,190.7 120.0,191.8 120.3,193.0 120.9,194.7 121.3,195.8 121.9,197.0 122.6,198.0 123.4,199.1 124.4,200.1 125.5,201.0 126.7,201.9 128.0,202.7 129.5,203.5 133.0,204.9 134.7,205.6 136.2,206.0 137.4,206.2 138.5,206.2 139.4,206.0 140.3,205.6 141.2,205.0 142.1,204.2 143.1,203.0 144.2,201.5 146.2,198.4 147.0,196.9 147.7,195.5 148.2,194.1 148.6,192.7 148.8,191.3 148.9,190.0 148.9,188.7 148.7,187.5 148.5,186.3 148.0,184.5 147.6,183.4 147.1,182.3 146.6,181.4 145.9,180.6 145.2,179.9 144.3,179.3 143.4,178.8 142.5,178.6 141.4,178.5 139.8,178.7 137.8,179.2 136.3,179.7 135.4,180.2 134.7,180.7 133.1,182.6 132.8,182.9Z" fill="#962c50" fill-rule="evenodd"/><path d="M132.7,183.9 132.0,184.0 131.4,183.9 129.1,183.2 127.9,183.3 126.5,183.5 125.1,184.0 123.7,184.6 122.5,185.3 121.9,185.9 121.4,186.6 121.0,187.4 120.6,188.7 120.6,189.6 120.7,190.6 120.9,191.6 121.2,192.7 121.7,194.4 122.1,195.5 122.6,196.5 123.3,197.5 124.1,198.5 125.0,199.5 126.0,200.4 127.2,201.2 128.4,202.0 129.9,202.7 133.3,204.2 134.9,204.7 136.4,205.1 137.5,205.3 138.4,205.4 139.2,205.2 139.9,204.9 140.6,204.4 141.5,203.6 142.4,202.5 143.5,201.0 145.5,197.9 146.3,196.5 146.9,195.2 147.4,193.9 147.7,192.5 148.0,191.2 148.1,190.0 148.0,188.8 147.9,187.6 147.6,186.5 147.2,184.8 146.8,183.7 146.4,182.7 145.9,181.9 145.3,181.1 144.3,180.2 143.5,179.8 142.7,179.5 141.9,179.4 140.5,179.5 139.0,179.8 137.6,180.2 136.3,180.7 135.2,181.4 133.7,183.2 133.2,183.6Z" fill="#cc4e78" fill-rule="evenodd"/><path d="M133.3,186.1 132.1,186.3 131.1,186.2 130.3,186.0 128.9,185.6 128.5,185.6 127.5,185.7 126.3,186.1 125.1,186.5 124.1,187.1 123.7,187.3 123.4,187.7 123.1,188.5 123.0,189.0 122.9,189.6 123.0,190.2 123.4,192.1 124.1,194.1 124.5,195.0 124.9,195.8 125.5,196.5 126.2,197.4 127.1,198.2 128.0,198.9 129.0,199.6 130.2,200.2 134.2,202.0 135.7,202.5 136.9,202.8 138.0,203.0 138.5,203.0 139.0,202.7 139.8,202.0 140.6,201.0 141.5,199.7 143.8,196.1 144.5,194.8 144.9,193.7 145.3,192.6 145.5,191.4 145.7,190.4 145.7,189.4 145.7,188.5 145.5,187.5 144.9,185.5 144.2,183.7 143.9,183.2 143.6,182.7 143.2,182.3 142.5,181.9 142.0,181.8 141.5,181.7 140.4,181.9 139.1,182.1 138.0,182.5 137.0,183.0 136.7,183.2 135.9,184.3 135.3,184.9 134.5,185.6Z" fill="#a3345c" fill-rule="evenodd"/><path d="M128.7,186.5 128.0,186.5 127.0,186.8 125.1,187.5 124.3,188.0 124.0,188.7 123.8,189.4 123.8,189.8 124.1,191.3 124.9,193.8 125.3,194.6 125.7,195.3 126.5,196.3 127.6,197.5 129.0,198.5 130.0,199.1 131.9,200.1 135.5,201.5 137.4,202.0 138.1,202.1 138.3,202.0 139.1,201.3 139.9,200.4 140.8,199.2 142.3,196.9 143.1,195.6 143.7,194.5 144.1,193.4 144.4,192.4 144.7,191.3 144.8,190.3 144.8,189.4 144.8,188.6 144.5,187.3 144.1,185.8 143.6,184.5 143.2,183.7 142.6,183.0 142.2,182.8 141.9,182.6 141.3,182.7 140.5,182.8 138.7,183.2 137.4,183.8 136.5,184.9 135.9,185.6 135.0,186.4 133.6,187.0 132.1,187.2 130.9,187.1 130.0,186.9Z" fill="url(#sat)" fill-rule="evenodd"/>
<path d="M179.9,181.6 179.6,181.5 179.4,181.3 178.4,180.3 177.8,179.9 176.9,179.5 175.9,179.2 174.4,178.9 172.4,178.7 170.7,178.8 169.7,179.0 168.6,179.4 167.7,180.1 166.9,180.8 166.3,181.7 165.7,182.6 165.3,183.7 165.0,184.9 164.8,186.0 164.6,187.7 164.5,189.0 164.5,190.2 164.7,191.5 165.0,192.8 165.5,194.1 166.1,195.4 166.8,196.6 167.6,197.9 168.7,199.2 171.0,201.8 172.3,203.1 173.4,204.0 174.5,204.8 175.5,205.3 176.5,205.6 177.6,205.6 178.8,205.4 180.0,205.0 181.4,204.4 182.9,203.5 185.9,201.6 187.3,200.7 188.5,199.7 189.5,198.7 190.4,197.6 191.2,196.4 191.9,195.3 192.4,194.1 192.7,192.9 193.0,191.7 193.3,190.0 193.4,188.9 193.4,187.7 193.3,186.5 193.1,185.4 192.7,184.4 192.1,183.5 191.4,182.6 190.5,181.9 189.6,181.4 188.0,180.9 186.0,180.5 184.5,180.4 183.4,180.4 182.4,180.6 181.8,180.8 180.6,181.4 180.3,181.6Z" fill="#cbcece" fill-rule="evenodd"/><path d="M179.8,182.5 179.5,182.4 179.1,182.2 177.4,180.7 176.6,180.3 175.7,180.1 174.3,179.8 172.3,179.6 170.8,179.7 169.9,179.9 169.1,180.3 168.3,180.8 167.6,181.4 167.0,182.2 166.5,183.0 166.2,184.0 165.7,186.2 165.5,187.8 165.4,189.0 165.4,190.1 165.6,191.3 165.9,192.5 166.3,193.8 166.9,195.0 167.5,196.2 168.4,197.4 169.3,198.6 171.7,201.2 172.9,202.4 174.0,203.3 175.0,204.0 175.8,204.5 176.7,204.7 177.6,204.7 178.6,204.5 179.7,204.1 181.0,203.5 182.5,202.7 185.5,200.9 186.7,200.0 187.8,199.0 188.8,198.1 189.7,197.0 190.4,196.0 191.1,194.9 191.5,193.8 191.9,192.7 192.1,191.6 192.4,189.9 192.5,187.7 192.5,186.7 192.2,185.8 191.9,184.9 191.4,184.0 190.8,183.3 190.1,182.7 189.2,182.3 187.8,181.8 185.9,181.4 184.5,181.3 183.5,181.3 182.6,181.5 180.6,182.4 180.2,182.5Z" fill="#962c50" fill-rule="evenodd"/><path d="M179.7,183.4 179.1,183.2 178.6,182.9 176.9,181.4 175.9,181.0 174.6,180.7 173.3,180.5 171.8,180.5 170.5,180.6 169.8,180.8 169.1,181.2 168.5,181.7 167.7,182.7 167.3,183.4 167.0,184.3 166.5,186.3 166.3,189.0 166.3,190.1 166.4,191.1 166.7,192.3 167.1,193.4 167.7,194.6 168.3,195.8 169.1,196.9 170.0,198.1 172.3,200.6 173.4,201.8 174.5,202.7 175.4,203.3 176.1,203.7 176.8,203.8 177.5,203.9 178.3,203.7 179.4,203.4 180.6,202.8 182.1,202.0 185.0,200.2 186.2,199.3 187.3,198.4 188.2,197.5 189.0,196.5 189.7,195.5 190.3,194.5 190.7,193.5 191.1,192.5 191.5,189.8 191.7,187.7 191.6,186.8 191.4,186.0 190.9,184.9 190.4,184.2 189.9,183.7 189.3,183.2 188.0,182.7 186.7,182.4 185.3,182.2 184.0,182.1 182.9,182.3 180.9,183.2 180.3,183.4Z" fill="#cc4e78" fill-rule="evenodd"/><path d="M179.4,185.7 178.2,185.4 177.3,184.9 176.7,184.4 175.7,183.5 175.5,183.3 174.5,183.1 173.8,182.9 172.7,182.8 171.5,182.8 171.0,182.9 170.6,183.0 170.1,183.4 169.6,184.0 169.4,184.4 169.2,185.0 168.9,186.6 168.6,188.6 168.6,189.5 168.7,190.3 168.8,191.1 169.1,192.1 169.5,193.1 170.0,194.1 170.6,195.0 171.3,196.0 174.0,199.0 175.0,200.1 175.9,200.8 176.8,201.4 177.1,201.5 177.6,201.5 178.5,201.2 179.6,200.7 180.9,200.0 184.2,197.8 185.3,197.1 186.1,196.3 186.8,195.5 187.5,194.7 188.0,193.8 188.4,193.1 188.7,192.3 188.9,191.4 189.2,189.5 189.3,187.8 189.3,187.2 189.2,186.7 188.9,186.0 188.5,185.6 188.2,185.3 187.7,185.1 186.6,184.8 185.5,184.6 184.7,184.5 183.8,184.5 183.5,184.6 182.3,185.2 181.6,185.5 180.6,185.7Z" fill="#a3345c" fill-rule="evenodd"/><path d="M175.2,184.2 173.7,183.8 171.9,183.7 171.1,183.8 170.6,184.2 170.3,184.6 170.2,185.0 169.8,186.3 169.5,188.6 169.6,190.2 169.8,191.3 170.4,192.7 171.1,194.1 171.7,195.0 172.9,196.5 175.0,198.8 176.5,200.1 177.1,200.5 177.3,200.6 178.2,200.3 179.6,199.7 182.6,197.9 184.7,196.4 185.4,195.7 186.1,194.9 186.7,194.1 187.2,193.4 187.6,192.7 187.8,192.0 188.1,190.8 188.3,189.4 188.4,188.1 188.4,187.3 188.2,186.7 187.9,186.3 187.8,186.1 186.4,185.7 184.7,185.4 183.8,185.4 182.7,186.0 181.9,186.3 180.7,186.6 179.2,186.6 177.8,186.2 176.8,185.6 176.1,185.1Z" fill="url(#sat)" fill-rule="evenodd"/>
<path d="M216.0,176.7 215.6,176.5 214.0,175.5 213.4,175.2 212.4,174.9 211.3,174.7 209.6,174.6 207.4,174.7 205.6,175.0 204.5,175.4 203.5,176.0 202.6,176.8 201.9,177.7 201.3,178.7 200.8,179.8 200.5,181.0 200.4,182.3 200.4,183.5 200.4,185.4 200.5,186.7 200.7,188.0 201.1,189.3 201.6,190.6 202.3,192.0 203.1,193.3 204.1,194.5 205.2,195.7 206.5,196.9 209.5,199.4 211.0,200.5 212.4,201.4 213.7,202.0 214.9,202.4 216.0,202.5 217.1,202.4 218.3,202.0 219.6,201.4 221.0,200.5 222.5,199.4 225.5,196.9 226.8,195.7 227.9,194.5 228.9,193.3 229.7,192.0 230.4,190.6 230.9,189.3 231.3,188.0 231.5,186.7 231.6,185.4 231.6,183.5 231.6,182.3 231.5,181.0 231.2,179.8 230.7,178.7 230.1,177.7 229.4,176.8 228.5,176.0 227.5,175.4 226.4,175.0 224.6,174.7 222.4,174.6 220.7,174.7 219.6,174.9 218.6,175.2 218.0,175.5 216.4,176.5Z" fill="#cbcece" fill-rule="evenodd"/><path d="M216.0,177.6 215.6,177.5 215.2,177.3 213.1,176.0 212.2,175.7 211.2,175.6 209.6,175.5 207.5,175.6 205.8,175.9 204.8,176.2 204.0,176.8 203.2,177.4 202.6,178.2 202.1,179.1 201.7,180.1 201.4,181.2 201.3,182.4 201.3,183.5 201.3,185.3 201.4,186.6 201.6,187.8 201.9,189.0 202.5,190.3 203.1,191.5 203.9,192.8 204.8,193.9 205.9,195.1 207.1,196.3 210.0,198.7 211.5,199.8 212.8,200.6 214.0,201.2 215.0,201.5 216.0,201.6 217.0,201.5 218.0,201.2 219.2,200.6 220.5,199.8 222.0,198.7 224.9,196.3 226.1,195.1 227.2,193.9 228.1,192.8 228.9,191.5 229.5,190.3 230.1,189.0 230.4,187.8 230.6,186.6 230.7,185.3 230.7,183.5 230.7,182.4 230.6,181.2 230.3,180.1 229.9,179.1 229.4,178.2 228.8,177.4 228.0,176.8 227.2,176.2 226.2,175.9 224.5,175.6 222.4,175.5 220.8,175.6 219.8,175.7 218.9,176.0 216.8,177.3 216.4,177.5Z" fill="#962c50" fill-rule="evenodd"/><path d="M216.0,178.4 215.4,178.3 214.8,178.1 212.8,176.8 211.5,176.5 210.1,176.3 208.6,176.3 207.0,176.5 205.6,176.9 204.8,177.2 204.2,177.7 203.6,178.4 202.8,179.5 202.5,180.4 202.3,181.3 202.1,182.4 202.1,183.5 202.1,185.3 202.2,186.5 202.4,187.6 202.7,188.8 203.2,189.9 203.9,191.1 204.6,192.3 205.4,193.4 206.5,194.5 207.7,195.6 210.6,198.0 212.0,199.1 213.2,199.8 214.3,200.4 215.2,200.7 216.0,200.7 216.8,200.7 217.7,200.4 218.8,199.8 220.0,199.1 221.4,198.0 224.3,195.6 225.5,194.5 226.6,193.4 227.4,192.3 228.1,191.1 228.8,189.9 229.3,188.8 229.6,187.6 229.8,186.5 229.9,185.3 229.9,183.5 229.9,182.4 229.7,181.3 229.5,180.4 229.2,179.5 228.4,178.4 227.8,177.7 227.2,177.2 226.4,176.9 225.0,176.5 223.4,176.3 221.9,176.3 220.5,176.5 219.2,176.8 217.2,178.1 216.6,178.3Z" fill="#cc4e78" fill-rule="evenodd"/><path d="M216.0,180.8 214.8,180.6 213.8,180.2 213.1,179.8 211.9,179.0 211.5,178.9 210.4,178.7 209.2,178.7 207.8,178.8 206.7,179.0 206.2,179.2 205.7,179.5 205.2,180.1 204.9,180.6 204.7,181.1 204.6,181.7 204.5,183.6 204.5,185.7 204.6,186.7 204.8,187.5 205.1,188.4 205.6,189.4 206.2,190.4 206.9,191.4 207.7,192.4 208.6,193.3 210.4,194.9 212.5,196.5 213.7,197.4 214.7,198.0 215.4,198.3 216.0,198.4 216.6,198.3 217.3,198.0 218.3,197.4 219.5,196.5 221.6,194.9 223.4,193.3 224.3,192.4 225.1,191.4 225.8,190.4 226.4,189.4 226.9,188.4 227.2,187.5 227.4,186.7 227.5,185.7 227.5,183.6 227.4,181.7 227.3,181.1 227.1,180.6 226.8,180.1 226.3,179.5 225.8,179.2 225.3,179.0 224.2,178.8 222.8,178.7 221.6,178.7 220.5,178.9 220.1,179.0 218.9,179.8 218.2,180.2 217.2,180.6Z" fill="#a3345c" fill-rule="evenodd"/><path d="M211.4,179.8 209.9,179.6 207.9,179.7 206.7,179.9 206.5,180.0 206.1,180.4 205.8,180.8 205.6,181.3 205.4,182.6 205.4,184.1 205.4,185.6 205.5,186.5 205.7,187.3 206.2,188.5 207.0,189.9 207.9,191.3 208.8,192.2 210.4,193.7 213.4,196.1 215.1,197.2 215.8,197.5 216.2,197.5 217.2,197.0 218.2,196.4 219.4,195.4 221.6,193.7 222.7,192.7 223.7,191.7 224.4,190.9 225.0,189.9 225.6,189.0 226.0,188.1 226.3,187.3 226.5,186.5 226.6,185.1 226.6,183.6 226.6,182.2 226.4,181.3 226.0,180.6 225.8,180.3 225.4,180.0 224.8,179.8 224.1,179.7 222.1,179.6 220.6,179.8 219.4,180.6 218.6,181.0 217.5,181.5 216.0,181.7 214.5,181.5 213.4,181.0 212.6,180.6Z" fill="url(#sat)" fill-rule="evenodd"/>
<path d="M255.0,180.9 254.7,180.9 254.4,180.7 253.2,180.0 252.7,179.8 251.6,179.6 250.5,179.5 249.0,179.5 247.0,179.9 245.5,180.4 244.5,180.9 243.6,181.6 242.9,182.4 242.3,183.4 241.9,184.4 241.6,185.5 241.5,186.7 241.5,187.9 241.5,189.1 241.8,190.9 242.0,192.1 242.3,193.4 242.8,194.6 243.4,195.8 244.2,197.0 245.0,198.2 246.0,199.3 247.2,200.4 248.4,201.4 251.4,203.5 252.9,204.5 254.2,205.2 255.4,205.7 256.6,205.9 257.6,205.9 258.7,205.7 259.7,205.2 260.8,204.5 262.0,203.5 263.2,202.3 265.7,199.6 266.7,198.3 267.6,197.1 268.3,195.8 268.9,194.5 269.4,193.1 269.8,191.8 270.0,190.5 270.0,189.2 270.0,187.9 269.8,186.1 269.7,184.9 269.4,183.7 269.1,182.6 268.5,181.6 267.9,180.7 267.1,179.8 266.3,179.2 265.3,178.7 264.2,178.4 262.6,178.3 260.6,178.3 259.0,178.6 258.0,178.9 257.0,179.3 256.6,179.7 255.6,180.6 255.3,180.8Z" fill="#cbcece" fill-rule="evenodd"/><path d="M255.1,181.9 254.7,181.8 254.3,181.7 252.3,180.6 251.5,180.4 250.5,180.4 249.1,180.4 247.2,180.8 245.8,181.2 244.9,181.6 244.2,182.2 243.6,182.9 243.1,183.8 242.7,184.7 242.5,185.7 242.4,186.7 242.4,189.0 242.7,190.7 242.9,191.9 243.2,193.1 243.6,194.2 244.2,195.4 244.9,196.5 245.8,197.6 246.7,198.7 247.8,199.7 249.0,200.7 251.9,202.8 253.3,203.7 254.6,204.4 255.7,204.8 256.6,205.0 257.5,205.0 258.4,204.8 259.3,204.4 260.3,203.8 261.4,202.8 262.6,201.6 265.0,199.0 266.0,197.8 266.8,196.6 267.5,195.4 268.1,194.1 268.6,192.8 268.9,191.6 269.1,190.4 269.1,189.2 269.1,188.0 269.0,186.2 268.6,184.0 268.2,183.0 267.8,182.1 267.2,181.3 266.5,180.5 265.8,179.9 265.0,179.5 264.1,179.3 262.6,179.2 260.7,179.2 259.2,179.5 258.3,179.7 257.5,180.1 255.8,181.6 255.5,181.8Z" fill="#962c50" fill-rule="evenodd"/><path d="M255.2,182.7 254.6,182.7 254.0,182.5 252.0,181.4 251.0,181.3 249.6,181.2 248.3,181.4 247.0,181.7 245.7,182.2 245.1,182.6 244.6,183.1 244.1,183.8 243.5,185.0 243.3,185.8 243.2,186.8 243.3,188.9 243.7,191.7 244.0,192.8 244.4,193.9 244.9,195.0 245.6,196.1 246.4,197.1 247.3,198.1 248.3,199.1 249.5,200.0 252.3,202.1 253.7,202.9 254.9,203.6 256.0,204.0 256.7,204.2 257.4,204.2 258.1,204.0 258.8,203.7 259.8,203.1 260.8,202.2 262.0,201.1 264.3,198.5 265.3,197.3 266.1,196.1 266.8,195.0 267.3,193.8 267.7,192.6 268.1,191.4 268.2,190.3 268.3,189.1 268.1,186.3 267.7,184.2 267.4,183.3 267.1,182.5 266.3,181.5 265.7,180.9 265.0,180.5 264.3,180.2 263.0,180.0 261.6,180.0 260.3,180.1 259.0,180.4 258.0,180.8 256.3,182.3 255.8,182.6Z" fill="#cc4e78" fill-rule="evenodd"/><path d="M255.4,185.1 254.2,185.0 253.2,184.7 252.4,184.4 251.3,183.7 251.1,183.6 250.1,183.6 249.1,183.7 248.0,183.9 247.0,184.2 246.6,184.4 246.2,184.8 245.8,185.5 245.7,186.0 245.6,186.5 245.5,187.3 245.6,188.7 245.9,190.8 246.1,191.7 246.4,192.5 246.7,193.4 247.3,194.3 247.9,195.2 248.6,196.1 249.4,196.9 250.4,197.7 253.7,200.1 254.9,200.9 255.9,201.5 256.7,201.8 257.2,201.8 257.7,201.7 258.3,201.2 259.2,200.5 260.3,199.4 263.0,196.4 263.8,195.4 264.4,194.4 264.9,193.4 265.3,192.4 265.6,191.4 265.8,190.5 265.9,189.6 265.9,188.6 265.8,186.6 265.6,185.2 265.4,184.4 265.2,183.9 264.9,183.5 264.4,182.9 264.0,182.6 263.5,182.4 262.5,182.4 261.3,182.4 260.3,182.5 259.4,182.7 259.2,182.9 258.2,183.8 257.6,184.2 256.7,184.8Z" fill="#a3345c" fill-rule="evenodd"/><path d="M247.1,185.1 246.8,185.6 246.5,186.4 246.4,187.3 246.5,188.6 246.8,190.6 247.1,191.8 247.4,192.6 248.0,193.8 248.9,195.1 249.6,195.9 250.4,196.6 251.5,197.5 254.2,199.4 255.7,200.3 257.1,200.9 257.4,200.8 258.3,200.1 259.3,199.2 261.9,196.4 262.7,195.3 263.3,194.4 263.9,193.5 264.3,192.5 264.6,191.6 264.9,190.7 265.0,190.0 265.0,188.7 264.9,186.7 264.7,185.4 264.4,184.5 264.1,184.0 263.6,183.4 263.1,183.3 261.4,183.3 260.2,183.5 259.7,183.6 258.8,184.4 258.1,185.0 257.0,185.6 255.5,186.0 254.0,185.9 252.8,185.5 252.0,185.2 250.9,184.5 250.1,184.5 249.2,184.6 247.8,184.8Z" fill="url(#sat)" fill-rule="evenodd"/>
<path d="M298.0,181.4 297.7,181.2 296.5,179.9 296.0,179.5 295.1,178.9 294.0,178.5 292.4,178.1 290.3,177.8 288.6,177.7 287.5,177.9 286.4,178.3 285.4,178.9 284.5,179.6 283.8,180.5 283.1,181.4 282.6,182.6 282.2,183.7 281.9,185.0 281.6,186.7 281.4,188.0 281.3,189.4 281.4,190.7 281.7,192.1 282.0,193.5 282.5,194.9 283.2,196.3 284.0,197.8 284.9,199.2 287.2,202.1 288.4,203.6 289.5,204.7 290.6,205.5 291.6,206.1 292.7,206.5 293.8,206.6 295.0,206.5 296.4,206.1 297.8,205.6 299.5,204.8 302.8,203.0 304.3,202.1 305.6,201.1 306.7,200.1 307.7,199.0 308.7,197.8 309.5,196.7 310.1,195.5 310.6,194.2 310.9,193.0 311.3,191.2 311.6,190.0 311.7,188.7 311.7,187.5 311.5,186.4 311.1,185.3 310.6,184.2 309.9,183.3 309.1,182.5 308.1,181.9 306.6,181.2 304.5,180.6 302.9,180.4 301.8,180.4 300.7,180.5 300.1,180.7 298.4,181.4Z" fill="#cbcece" fill-rule="evenodd"/><path d="M297.9,182.3 297.5,182.1 297.1,181.9 295.5,180.2 294.7,179.7 293.7,179.4 292.3,179.0 290.3,178.7 288.7,178.6 287.7,178.8 286.8,179.1 285.9,179.6 285.1,180.3 284.5,181.0 283.9,181.9 283.4,182.9 283.1,184.0 282.8,185.1 282.5,186.9 282.3,188.1 282.2,189.4 282.3,190.6 282.5,191.9 282.9,193.3 283.4,194.6 284.0,196.0 284.7,197.3 285.7,198.6 287.9,201.6 289.1,202.9 290.1,204.0 291.1,204.8 292.0,205.3 292.9,205.6 293.8,205.7 294.9,205.6 296.1,205.3 297.5,204.7 299.1,204.0 302.4,202.2 303.7,201.3 305.0,200.4 306.1,199.4 307.1,198.4 307.9,197.3 308.7,196.2 309.3,195.1 309.7,193.9 310.1,192.8 310.5,191.0 310.7,189.9 310.8,188.7 310.8,187.6 310.6,186.6 310.3,185.6 309.8,184.7 309.3,183.9 308.6,183.2 307.7,182.7 306.3,182.1 304.3,181.5 302.8,181.3 301.8,181.3 300.9,181.4 298.7,182.2 298.3,182.3Z" fill="#962c50" fill-rule="evenodd"/><path d="M297.7,183.1 297.1,182.9 296.6,182.6 294.9,180.9 293.9,180.3 292.6,179.9 291.2,179.6 289.7,179.5 288.3,179.5 287.5,179.7 286.8,180.1 286.1,180.6 285.1,181.6 284.6,182.3 284.2,183.2 283.6,185.3 283.3,187.0 283.1,188.2 283.1,189.4 283.1,190.5 283.4,191.7 283.7,193.0 284.2,194.3 284.7,195.6 285.5,196.8 286.3,198.2 288.6,201.1 289.7,202.4 290.7,203.4 291.6,204.1 292.3,204.5 293.1,204.8 293.8,204.9 294.7,204.8 295.8,204.5 297.2,203.9 298.7,203.2 301.9,201.5 303.3,200.6 304.4,199.8 305.5,198.8 306.4,197.8 307.2,196.8 307.9,195.8 308.5,194.8 308.9,193.7 309.2,192.5 309.6,190.9 309.9,188.7 309.9,187.7 309.8,186.8 309.3,185.5 308.9,184.8 308.4,184.2 307.7,183.7 306.5,183.1 305.1,182.6 303.7,182.3 302.3,182.1 301.1,182.2 298.9,183.1 298.3,183.2Z" fill="#cc4e78" fill-rule="evenodd"/><path d="M297.2,185.4 296.0,185.0 295.1,184.4 294.5,183.9 293.6,182.8 293.3,182.6 292.3,182.3 291.2,182.0 290.0,181.9 288.9,181.8 288.4,181.9 288.0,182.1 287.4,182.6 287.0,183.0 286.7,183.4 286.4,184.0 285.9,185.8 285.5,187.9 285.4,188.9 285.4,189.8 285.6,190.7 285.8,191.8 286.1,192.9 286.6,194.0 287.1,195.0 287.8,196.2 290.4,199.6 291.4,200.8 292.3,201.6 293.1,202.3 293.6,202.5 294.0,202.5 295.1,202.2 296.2,201.8 297.6,201.1 301.4,199.1 302.5,198.3 303.4,197.6 304.3,196.7 305.0,195.9 305.7,195.0 306.1,194.2 306.5,193.4 306.8,192.4 307.3,190.4 307.6,188.5 307.6,187.9 307.5,187.4 307.3,186.8 307.0,186.1 306.6,185.8 306.3,185.5 305.2,185.1 304.0,184.7 302.9,184.5 301.9,184.5 301.5,184.5 300.3,185.1 299.5,185.3 298.4,185.5Z" fill="#a3345c" fill-rule="evenodd"/><path d="M293.0,183.5 292.4,183.2 291.4,183.0 289.5,182.7 288.6,182.8 288.0,183.2 287.6,183.7 287.4,184.1 286.9,185.6 286.4,188.0 286.3,188.9 286.3,189.7 286.5,191.0 287.0,192.6 287.6,194.1 288.2,195.1 289.4,196.9 291.8,199.8 293.1,201.2 293.6,201.5 293.8,201.6 294.8,201.4 296.3,200.8 299.6,199.0 302.0,197.6 302.8,196.9 303.6,196.1 304.3,195.3 304.9,194.5 305.3,193.8 305.7,193.0 306.1,191.7 306.4,190.2 306.7,188.9 306.7,188.0 306.5,187.1 306.1,186.5 304.9,186.0 303.1,185.5 301.8,185.4 300.6,185.9 299.7,186.2 298.5,186.4 297.0,186.3 295.6,185.8 294.6,185.1 293.9,184.5Z" fill="url(#sat)" fill-rule="evenodd"/>
<path d="M336.8,191.1 336.2,190.8 335.3,189.9 334.8,189.5 333.8,189.0 332.8,188.7 331.3,188.4 329.4,188.3 327.8,188.3 326.7,188.6 325.7,189.0 324.8,189.6 324.0,190.4 323.4,191.3 322.8,192.2 322.4,193.3 322.1,194.5 321.9,195.7 321.7,197.4 321.6,198.6 321.6,199.9 321.8,201.1 322.1,202.5 322.6,203.8 323.1,205.1 323.8,206.4 324.6,207.7 325.6,209.0 327.9,211.6 329.1,212.9 330.2,213.8 331.3,214.6 332.3,215.1 333.3,215.4 334.4,215.4 335.5,215.2 336.8,214.8 338.1,214.1 339.6,213.3 342.6,211.3 343.9,210.4 345.0,209.4 346.0,208.3 346.9,207.2 347.7,206.1 348.4,204.9 348.9,203.7 349.3,202.5 349.5,201.3 349.8,199.6 349.9,198.4 350.0,197.2 349.9,196.0 349.6,195.0 349.2,193.9 348.7,193.0 348.0,192.1 347.1,191.4 346.2,190.9 344.7,190.4 342.7,190.0 341.2,189.9 340.2,189.9 339.1,190.1 338.6,190.3 337.4,191.0Z" fill="#cbcece" fill-rule="evenodd"/><path d="M336.6,192.0 336.3,191.9 335.9,191.7 334.3,190.2 333.5,189.9 332.6,189.6 331.2,189.3 329.3,189.2 327.9,189.2 326.9,189.4 326.1,189.8 325.4,190.3 324.7,191.0 324.1,191.8 323.6,192.6 323.3,193.6 322.8,195.8 322.5,198.6 322.5,199.8 322.7,201.0 323.0,202.2 323.4,203.5 323.9,204.7 324.6,205.9 325.4,207.2 326.3,208.4 328.6,211.0 329.7,212.2 330.8,213.1 331.8,213.8 332.6,214.3 333.5,214.5 334.4,214.5 335.3,214.3 336.4,213.9 337.7,213.3 339.1,212.5 342.1,210.6 343.3,209.7 344.4,208.7 345.3,207.7 346.2,206.7 346.9,205.6 347.6,204.5 348.0,203.4 348.4,202.3 348.9,199.5 349.1,197.2 349.0,196.2 348.8,195.3 348.4,194.4 347.9,193.5 347.4,192.8 346.7,192.2 345.8,191.8 344.4,191.3 342.6,190.9 341.2,190.8 340.3,190.8 339.4,191.0 337.4,191.9 337.0,192.0Z" fill="#962c50" fill-rule="evenodd"/><path d="M336.5,192.9 335.9,192.7 335.5,192.4 333.8,190.9 332.8,190.5 331.5,190.2 330.2,190.0 328.9,190.0 327.6,190.1 326.9,190.4 326.2,190.7 325.6,191.3 324.8,192.3 324.4,193.0 324.1,193.9 323.6,195.9 323.4,198.6 323.4,199.8 323.5,200.8 323.8,202.0 324.2,203.2 324.7,204.4 325.3,205.5 326.1,206.7 327.0,207.8 329.2,210.4 330.3,211.6 331.3,212.5 332.2,213.1 332.9,213.5 333.6,213.6 334.3,213.7 335.1,213.5 336.1,213.1 337.3,212.6 338.7,211.8 341.6,209.9 342.8,209.0 343.8,208.1 344.7,207.2 345.5,206.2 346.2,205.1 346.8,204.1 347.2,203.1 347.6,202.0 348.1,199.3 348.2,197.3 348.1,196.3 347.9,195.5 347.4,194.3 347.0,193.7 346.5,193.1 345.9,192.7 344.7,192.2 343.3,191.9 342.0,191.7 340.7,191.6 339.7,191.8 337.7,192.7 337.1,192.9Z" fill="#cc4e78" fill-rule="evenodd"/><path d="M332.5,192.9 331.8,192.7 330.8,192.5 328.9,192.4 327.9,192.5 327.6,192.7 327.3,192.9 326.6,193.8 326.2,194.9 326.0,196.3 325.8,197.8 325.7,199.6 325.9,200.9 326.4,202.3 327.1,203.9 328.0,205.3 329.7,207.4 332.0,209.9 333.3,211.0 333.8,211.3 334.1,211.3 334.9,211.1 336.2,210.5 337.5,209.8 339.6,208.4 341.8,206.8 342.6,206.0 343.3,205.2 344.0,204.3 344.5,203.5 344.9,202.7 345.2,201.9 345.5,200.5 345.7,199.0 345.9,197.7 345.8,197.0 345.8,196.4 345.6,196.0 345.2,195.1 344.8,194.8 344.0,194.5 342.1,194.1 341.5,194.0 340.5,194.0 340.3,194.0 339.2,194.7 338.4,195.0 337.4,195.2 336.2,195.2 335.0,194.9 334.1,194.4Z" fill="#a3345c" fill-rule="evenodd"/><path d="M328.2,193.3 327.8,193.7 327.4,194.3 327.1,195.1 326.9,196.4 326.6,198.3 326.6,199.5 326.7,200.3 327.1,201.5 327.4,202.5 327.9,203.4 328.4,204.3 329.1,205.3 330.4,206.8 332.0,208.6 332.9,209.5 333.6,210.1 334.1,210.4 334.6,210.2 335.8,209.7 337.5,208.7 339.1,207.6 340.8,206.5 341.9,205.4 342.9,204.2 343.5,203.4 344.1,202.3 344.4,201.2 344.7,199.9 344.9,198.0 344.9,197.0 344.8,196.3 344.4,195.6 343.7,195.3 342.3,195.0 341.4,194.9 340.6,194.9 339.6,195.5 338.7,195.8 337.6,196.1 336.1,196.1 334.6,195.7 333.6,195.1 332.9,194.5 332.0,193.7 331.3,193.5 330.4,193.3 328.9,193.3Z" fill="url(#sat)" fill-rule="evenodd"/></svg>
</body></html>
